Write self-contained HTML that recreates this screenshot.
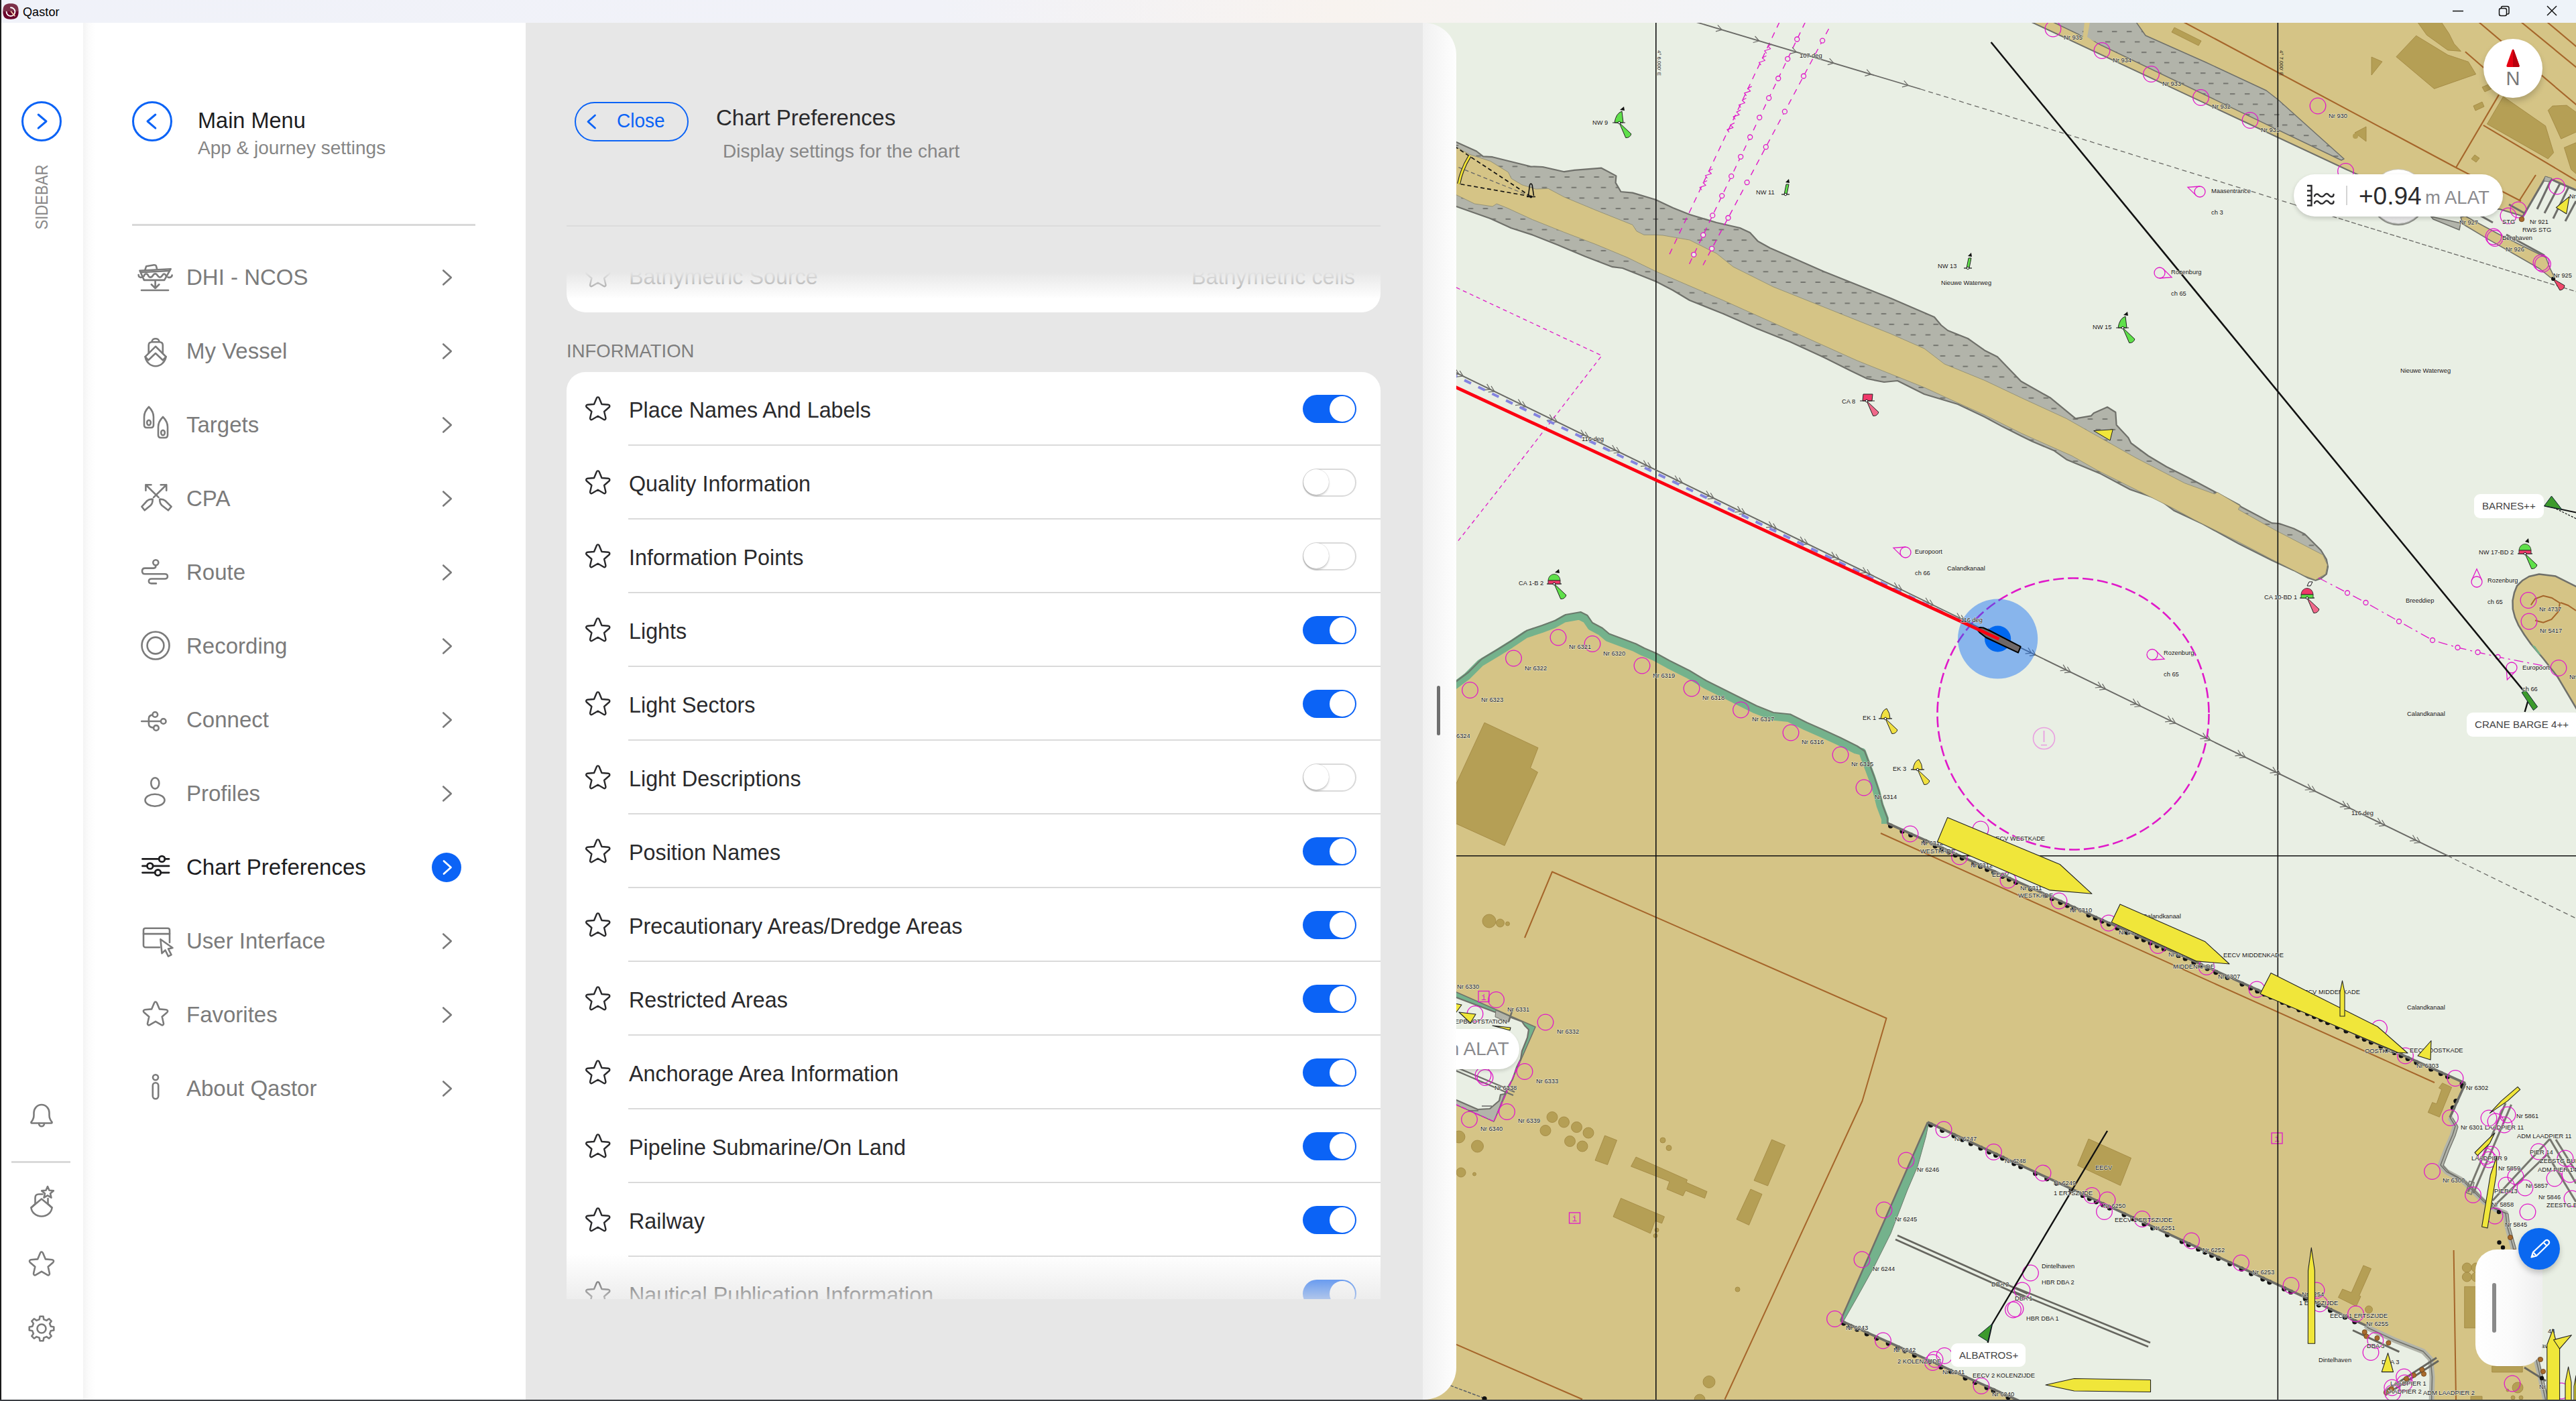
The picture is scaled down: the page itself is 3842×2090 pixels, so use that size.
<!DOCTYPE html>
<html><head><meta charset="utf-8"><title>Qastor</title>
<style>
*{box-sizing:border-box;margin:0;padding:0}
html,body{width:3842px;height:2090px;overflow:hidden;background:#fff;font-family:"Liberation Sans",sans-serif;}
.abs{position:absolute}
#titlebar{position:absolute;left:0;top:0;width:3842px;height:34px;background:linear-gradient(90deg,#f0f2f9 0,#f1f2f8 1400px,#f8f3ef 2000px,#f2f3f7 2600px,#eef3f9 3300px,#eef3f9 3842px);}
#titlebar .name{position:absolute;left:34px;top:7px;font-size:18px;line-height:22px;color:#000;letter-spacing:0.1px}
#lborder{position:absolute;left:0;top:0;width:2px;height:2090px;background:linear-gradient(90deg,#222,#111)}
#bborder{position:absolute;left:0;top:2088px;width:3842px;height:2px;background:linear-gradient(180deg,#33363a,#42454a)}
#sidebar{position:absolute;left:2px;top:34px;width:122px;height:2054px;background:#fff}
#menu{position:absolute;left:124px;top:34px;width:660px;height:2054px;background:linear-gradient(90deg,#f4f4f4 0,#fbfbfb 8px,#fff 18px,#fff 100%)}
#mid{position:absolute;left:784px;top:34px;width:1338px;height:2054px;background:#e7e7e7}
#midside{position:absolute;left:2122px;top:34px;width:50px;height:2054px;background:linear-gradient(90deg,#f1f1f1 0,#f6f6f6 40%,#fefefe 100%);border-radius:0 48px 48px 0}
.circ{position:absolute;width:60px;height:60px;border:3px solid #0b63f6;border-radius:50%}
.mi{position:absolute;left:0;width:660px;height:110px}
.mi .t{position:absolute;left:154px;top:36px;font-size:33px;line-height:38px;color:#7b7b7b;white-space:nowrap}
.mi.act .t{color:#1d1d1f}
.mi svg.ic{position:absolute;left:76px;top:23px;width:64px;height:64px;overflow:visible}
.mi svg.ch{position:absolute;left:528px;top:38px;width:30px;height:34px;overflow:visible}
.g{stroke:#7b7b7b;fill:none;stroke-width:2.6;stroke-linecap:round;stroke-linejoin:round}
.k{stroke:#1d1d1f;fill:none;stroke-width:2.8;stroke-linecap:round;stroke-linejoin:round}
.row{position:absolute;left:0;width:1214px;height:110px}
.row .t{position:absolute;left:93px;top:37.500px;font-size:32.300px;line-height:38px;color:#2a2a2c;white-space:nowrap}
.row .sep{position:absolute;left:92px;right:0;top:108px;height:2px;background:#dadada}
.row svg.st{position:absolute;left:27px;top:33px;width:40px;height:40px;overflow:visible}
.tg{position:absolute;left:1098px;top:34px;width:80px;height:42px;border-radius:21px}
.tg.on{background:#0b63f6}
.tg.on i{position:absolute;right:2px;top:2px;width:38px;height:38px;border-radius:50%;background:#fff}
.tg.off{background:#fff;border:2px solid #d9d9d9}
.tg.off i{position:absolute;left:-1px;top:-1px;width:38px;height:38px;border-radius:50%;background:#fff;box-shadow:0 2px 3px rgba(0,0,0,.22),0 0 1px rgba(0,0,0,.25)}
</style></head><body>
<div id="titlebar">
<svg class="abs" style="left:4px;top:5px" width="24" height="24" viewBox="0 0 24 24"><defs><linearGradient id="lg" x1="0" y1="0" x2="0" y2="1"><stop offset="0.5" stop-color="#7c3049"/><stop offset="0.5" stop-color="#69062c"/></linearGradient></defs><path d="M12 0.3C19.5 0.3 23.7 2.5 23.7 12S19.5 23.7 12 23.7 0.3 21.5 0.3 12 4.500 0.300 12 0.300Z" fill="url(#lg)"/><path d="M5.6 12.6a6.4 6.400 0 1 0 6.400-6.400" fill="none" stroke="#fff" stroke-width="1.900" stroke-linecap="round"/><path d="M12.500 12.200L18 18.600" stroke="#f3cfa6" stroke-width="1.700" stroke-linecap="round"/></svg>
<div class="name">Qastor</div>
<svg class="abs" style="left:3640px;top:0" width="202" height="34" viewBox="0 0 202 34"><g stroke="#111" stroke-width="1.500" fill="none"><path d="M18 16.500H34"/><rect x="87.500" y="12.500" width="11" height="11" rx="2.500"/><path d="M90.500 12.500V11.500a2 2 0 0 1 2-2h7a2.500 2.500 0 0 1 2.500 2.500v7a2 2 0 0 1-2 2h-1"/><path d="M159 9L173 23M173 9L159 23"/></g></svg>
</div>
<svg class="abs" style="left:2122px;top:34px" width="1720" height="2056" viewBox="2122 34 1720 2056" font-family="Liberation Sans, sans-serif">
<defs><pattern id="dash" width="22" height="31.400" patternUnits="userSpaceOnUse" x="2267.500" y="254.200"><rect x="0" y="9" width="7.500" height="1.700" fill="#6b6c66"/><rect x="10.200" y="24.700" width="7.500" height="1.700" fill="#6b6c66"/></pattern><pattern id="dash2" width="22" height="31" patternUnits="userSpaceOnUse" x="3127.900" y="37.200"><rect x="0" y="9" width="7.500" height="1.700" fill="#6b6c66"/><rect x="12" y="24.500" width="7.500" height="1.700" fill="#6b6c66"/></pattern>
<clipPath id="mapclip"><rect x="2122" y="34" width="1720" height="2053"/></clipPath></defs>
<rect x="2122" y="34" width="1720" height="2056" fill="#e9efe4"/>
<polygon points="2122.0,190.0 2172.0,212.0 2202.0,225.5 2212.0,233.4 2226.0,234.2 2282.5,248.3 2301.0,249.0 2333.0,256.2 2348.0,253.8 2388.5,250.7 2410.4,262.4 2409.6,272.6 2417.5,286.0 2435.0,287.6 2469.0,297.8 2495.0,310.0 2520.0,320.0 2560.0,332.0 2595.0,340.0 2610.0,347.0 2622.0,360.0 2640.0,370.0 2670.0,383.0 2720.0,405.0 2770.0,425.0 2820.0,445.0 2885.0,473.0 2895.0,485.0 2905.0,493.0 2935.0,505.0 2960.0,522.7 2979.0,532.2 3014.2,568.8 3057.6,593.2 3095.6,624.4 3118.7,620.4 3122.7,616.3 3143.0,607.3 3155.3,615.0 3156.6,634.0 3174.3,652.9 3178.3,661.0 3204.0,680.0 3231.2,696.3 3266.5,714.0 3304.4,734.3 3339.7,753.2 3342.4,756.0 3388.5,780.4 3399.4,781.0 3421.0,788.5 3437.4,796.7 3448.2,807.5 3461.7,821.0 3469.9,834.6 3472.0,845.5 3469.9,856.3 3461.7,863.0 3453.6,865.8 3442.8,862.3 3421.0,850.9 3388.5,836.0 3339.7,811.6 3285.5,781.7 3242.0,761.4 3220.4,745.1 3177.0,730.2 3133.6,707.1 3082.0,685.4 3063.0,671.9 3030.5,658.3 3014.2,650.2 2987.0,636.6 2960.0,622.0 2920.0,603.0 2870.0,588.0 2850.0,578.0 2830.0,568.0 2810.0,570.0 2785.0,565.0 2760.0,553.0 2720.0,533.0 2670.0,510.0 2620.0,490.0 2570.0,468.0 2520.0,448.0 2495.0,433.0 2470.0,420.0 2420.0,400.0 2405.0,398.2 2364.0,382.5 2323.0,365.3 2285.6,350.4 2254.0,340.2 2222.8,326.0 2172.0,308.0 2122.0,290.0" fill="#b2b4aa" stroke="#6f706a" stroke-width="2.2" stroke-linejoin="round" />
<polygon points="2122.0,190.0 2172.0,212.0 2202.0,225.5 2212.0,233.4 2226.0,234.2 2282.5,248.3 2301.0,249.0 2333.0,256.2 2348.0,253.8 2388.5,250.7 2410.4,262.4 2409.6,272.6 2417.5,286.0 2435.0,287.6 2469.0,297.8 2495.0,310.0 2520.0,320.0 2560.0,332.0 2595.0,340.0 2610.0,347.0 2622.0,360.0 2640.0,370.0 2670.0,383.0 2720.0,405.0 2770.0,425.0 2820.0,445.0 2885.0,473.0 2895.0,485.0 2905.0,493.0 2935.0,505.0 2960.0,522.7 2979.0,532.2 3014.2,568.8 3057.6,593.2 3095.6,624.4 3118.7,620.4 3122.7,616.3 3143.0,607.3 3155.3,615.0 3156.6,634.0 3174.3,652.9 3178.3,661.0 3204.0,680.0 3231.2,696.3 3266.5,714.0 3304.4,734.3 3339.7,753.2 3342.4,756.0 3388.5,780.4 3399.4,781.0 3421.0,788.5 3437.4,796.7 3448.2,807.5 3461.7,821.0 3469.9,834.6 3472.0,845.5 3469.9,856.3 3461.7,863.0 3453.6,865.8 3442.8,862.3 3421.0,850.9 3388.5,836.0 3339.7,811.6 3285.5,781.7 3242.0,761.4 3220.4,745.1 3177.0,730.2 3133.6,707.1 3082.0,685.4 3063.0,671.9 3030.5,658.3 3014.2,650.2 2987.0,636.6 2960.0,622.0 2920.0,603.0 2870.0,588.0 2850.0,578.0 2830.0,568.0 2810.0,570.0 2785.0,565.0 2760.0,553.0 2720.0,533.0 2670.0,510.0 2620.0,490.0 2570.0,468.0 2520.0,448.0 2495.0,433.0 2470.0,420.0 2420.0,400.0 2405.0,398.2 2364.0,382.5 2323.0,365.3 2285.6,350.4 2254.0,340.2 2222.8,326.0 2172.0,308.0 2122.0,290.0" fill="url(#dash)"/>
<polygon points="2122.0,196.0 2172.0,219.3 2191.4,230.2 2222.8,240.4 2249.5,256.9 2254.2,266.4 2270.0,275.8 2290.3,282.0 2309.2,281.3 2332.7,293.8 2380.0,313.5 2434.8,335.4 2441.0,344.9 2452.0,350.4 2469.3,350.4 2480.0,351.0 2520.0,358.0 2560.0,378.0 2585.0,398.0 2645.0,428.0 2720.0,458.0 2820.0,498.0 2870.0,520.0 2900.0,543.0 2960.0,567.5 3014.2,593.2 3082.0,624.4 3122.7,647.5 3185.0,682.7 3258.3,720.7 3303.0,737.0 3307.0,734.3 3341.0,754.6 3338.3,760.0 3394.0,791.2 3464.5,827.8 3471.2,842.8 3468.5,856.3 3453.6,865.0 3437.4,859.0 3388.5,834.6 3339.7,808.9 3272.0,775.0 3242.0,758.7 3177.0,726.1 3128.2,701.7 3090.2,680.0 3041.4,658.3 3014.2,646.1 2960.0,619.0 2920.0,601.0 2870.0,578.0 2770.0,538.0 2670.0,493.0 2570.0,448.0 2470.0,405.0 2426.9,384.0 2380.0,364.5 2332.7,346.4 2285.6,327.6 2248.0,310.3 2232.2,304.0 2226.0,308.0 2199.3,304.0 2172.0,290.7 2122.0,268.0" fill="#d5c486" stroke="#8c8a70" stroke-width="0.8" stroke-linejoin="round" />
<polyline points="2283.0,293.0 2172.0,220.0" fill="none" stroke="#111" stroke-width="1.6" stroke-linejoin="round" stroke-dasharray="6 4"/>
<polyline points="2283.0,293.0 2175.7,274.2" fill="none" stroke="#111" stroke-width="1.6" stroke-linejoin="round" stroke-dasharray="6 4"/>
<polyline points="2283.0,293.0 2172.0,248.3" fill="none" stroke="#666" stroke-width="1.2" stroke-linejoin="round" stroke-dasharray="6 4"/>
<path d="M2192.200 232.600Q2180 252 2175.700 274.200" fill="none" stroke="#222" stroke-width="5"/><path d="M2192.200 232.600Q2180 252 2175.700 274.200" fill="none" stroke="#f3e531" stroke-width="2.800"/>
<path d="M2279.500 292L2281.500 276Q2283.300 272 2285.200 276L2287.500 292M2277 293.500H2290" fill="none" stroke="#111" stroke-width="1.600"/><circle cx="2283.300" cy="293.500" r="2" fill="#111"/>
<polygon points="3122.7,642.6 3151.2,640.7 3147.1,657.0" fill="#f0e63a" stroke="#222" stroke-width="1" stroke-linejoin="round" />
<polygon points="3015.0,25.0 3030.0,33.0 3500.0,253.0 3560.0,280.0 3625.0,312.0 3728.0,312.0 3763.0,322.5 3761.0,326.0 3797.0,264.0 3842.0,283.0 3860.0,290.0 3860.0,25.0" fill="#d5c486" stroke="#6f706a" stroke-width="2" stroke-linejoin="round" />
<polygon points="3062.0,33.0 3186.0,33.0 3200.0,53.0 3290.0,93.0 3380.0,135.0 3398.0,149.0 3496.0,237.0 3492.0,239.0" fill="#b2b4aa" stroke="#6f706a" stroke-width="1.5" stroke-linejoin="round" />
<polygon points="3062.0,33.0 3186.0,33.0 3200.0,53.0 3290.0,93.0 3380.0,135.0 3398.0,149.0 3496.0,237.0 3492.0,239.0" fill="url(#dash2)"/>
<polygon points="3109.0,33.0 3117.0,33.0 3113.0,55.0 3135.0,70.0 3131.0,76.0 3106.0,58.0" fill="#d5c486" stroke="none" stroke-width="0" stroke-linejoin="round" />
<polygon points="3625.6,323.0 3670.0,332.8 3668.0,343.0 3629.0,327.0" fill="#b2b4aa" stroke="#6f706a" stroke-width="1.5" stroke-linejoin="round" />
<polygon points="3670.0,324.0 3677.0,322.5 3728.0,350.0 3797.0,384.0 3803.8,401.3 3810.6,415.0 3803.8,414.0 3788.0,401.0 3711.0,356.8 3673.6,334.5" fill="#d5c486" stroke="#6f706a" stroke-width="1.5" stroke-linejoin="round" />
<line x1="3761.0" y1="326.0" x2="3797.0" y2="264.0" stroke="#6e6e6a" stroke-width="3" />
<line x1="3797.0" y1="264.0" x2="3842.0" y2="284.0" stroke="#6e6e6a" stroke-width="3" />
<line x1="3805.0" y1="268.0" x2="3784.0" y2="312.0" stroke="#6e6e6a" stroke-width="3" />
<line x1="3818.0" y1="274.0" x2="3795.0" y2="318.0" stroke="#6e6e6a" stroke-width="3" />
<line x1="3831.0" y1="279.0" x2="3808.0" y2="326.0" stroke="#6e6e6a" stroke-width="3" />
<line x1="3842.0" y1="300.0" x2="3826.0" y2="330.0" stroke="#6e6e6a" stroke-width="3" />
<line x1="3765.0" y1="318.0" x2="3742.0" y2="305.0" stroke="#6e6e6a" stroke-width="3" />
<line x1="3700.0" y1="322.0" x2="3718.0" y2="332.0" stroke="#6e6e6a" stroke-width="3" />
<line x1="3738.0" y1="350.0" x2="3795.0" y2="381.0" stroke="#6e6e6a" stroke-width="3" />
<polygon points="3796.0,263.0 3806.0,266.0 3802.0,271.0 3794.0,270.0" fill="#b2b4aa" stroke="#6f706a" stroke-width="1" stroke-linejoin="round" />
<polygon points="3603.6,53.2 3650.9,82.0 3681.5,92.2 3692.7,110.7 3630.5,132.4 3573.9,84.7" fill="#b59f55" stroke="#a08540" stroke-width="0.8" stroke-linejoin="round" />
<polygon points="3600.0,25.0 3636.0,25.0 3652.8,50.4 3660.2,65.3 3670.4,76.4 3650.9,74.9 3619.4,52.3" fill="#b59f55" stroke="#a08540" stroke-width="0.8" stroke-linejoin="round" />
<polygon points="3733.5,144.1 3796.5,187.8 3808.6,227.7 3800.3,236.9 3709.4,185.0" fill="#b59f55" stroke="#a08540" stroke-width="0.8" stroke-linejoin="round" />
<polygon points="3800.3,164.6 3806.8,158.1 3828.1,157.1 3850.0,173.0 3850.0,193.5 3819.7,207.2" fill="#b59f55" stroke="#a08540" stroke-width="0.8" stroke-linejoin="round" />
<polygon points="3824.4,220.2 3850.0,209.5 3850.0,266.0 3834.6,252.7" fill="#b59f55" stroke="#a08540" stroke-width="0.8" stroke-linejoin="round" />
<polygon points="3239.0,48.0 3243.0,41.0 3283.0,61.0 3279.0,68.0" fill="#b59f55" stroke="#a08540" stroke-width="0.8" stroke-linejoin="round" />
<polygon points="3537.0,85.0 3553.0,92.0 3537.0,112.0" fill="#b59f55" stroke="#a08540" stroke-width="0.8" stroke-linejoin="round" />
<polygon points="3702.0,130.0 3716.0,124.0 3719.0,131.0 3706.0,137.0" fill="#b59f55" stroke="#a08540" stroke-width="0.8" stroke-linejoin="round" />
<polygon points="3689.0,158.0 3702.0,152.0 3705.0,159.0 3692.0,165.0" fill="#b59f55" stroke="#a08540" stroke-width="0.8" stroke-linejoin="round" />
<polygon points="3686.0,237.0 3691.0,231.0 3698.0,236.0 3693.0,242.0" fill="#b59f55" stroke="#a08540" stroke-width="0.8" stroke-linejoin="round" />
<polygon points="3512.0,198.0 3529.0,189.0 3529.0,211.0" fill="#b59f55" stroke="#a08540" stroke-width="0.8" stroke-linejoin="round" />
<circle cx="3513.0" cy="203.0" r="4" fill="#b59f55" stroke="none" stroke-width="0" />
<line x1="3257.0" y1="33.0" x2="3663.0" y2="250.0" stroke="#a5652a" stroke-width="2.1" />
<line x1="3663.0" y1="250.0" x2="3760.0" y2="300.0" stroke="#a5652a" stroke-width="2.1" />
<line x1="3663.0" y1="250.0" x2="3727.0" y2="141.4" stroke="#a5652a" stroke-width="2.1" />
<line x1="3703.8" y1="186.8" x2="3850.0" y2="274.0" stroke="#a5652a" stroke-width="2.1" />
<line x1="3676.9" y1="77.3" x2="3706.0" y2="102.5" stroke="#a5652a" stroke-width="2.1" />
<line x1="3693.6" y1="30.0" x2="3850.0" y2="162.7" stroke="#a5652a" stroke-width="2.1" />
<line x1="3756.7" y1="30.0" x2="3850.0" y2="106.7" stroke="#a5652a" stroke-width="2.1" />
<line x1="3795.6" y1="30.0" x2="3850.0" y2="76.0" stroke="#a5652a" stroke-width="2.1" />
<line x1="3757.0" y1="300.0" x2="3782.0" y2="261.0" stroke="#a5652a" stroke-width="2.1" />
<polygon points="3860.0,884.0 3811.6,859.6 3787.0,856.5 3772.0,860.0 3762.5,865.7 3754.0,874.0 3750.0,884.0 3747.5,896.0 3747.8,908.7 3751.0,921.0 3756.4,933.2 3765.0,947.0 3774.8,960.8 3793.0,982.3 3814.7,1010.0 3842.0,1056.0 3860.0,1086.0" fill="#d5c486" stroke="#6f706a" stroke-width="2.5" stroke-linejoin="round" />
<path d="M3774.800 902.500L3781 893.300L3793.200 888.700L3806 892L3817.800 899.500L3816.200 911.700L3805.500 924L3793.200 928.600L3781 925.500" fill="none" stroke="#a5652a" stroke-width="2"/><path d="M3819 899L3830 903L3842 911" fill="none" stroke="#a5652a" stroke-width="2"/>
<polygon points="3776.0,962.0 3781.0,964.0 3790.0,977.0 3786.0,976.0" fill="#74b28c" stroke="none" stroke-width="0" stroke-linejoin="round" />
<polygon points="2122.0,1060.0 2170.0,1018.0 2190.0,1003.0 2210.0,983.0 2235.0,968.0 2255.0,955.5 2277.5,940.5 2300.0,933.0 2320.0,925.5 2335.0,917.0 2357.5,913.0 2367.5,918.0 2375.0,929.0 2390.0,937.0 2400.0,945.5 2420.0,953.0 2440.0,960.5 2452.5,967.0 2470.0,974.5 2490.0,985.5 2520.0,1000.5 2545.0,1015.5 2570.0,1028.0 2595.0,1040.5 2620.0,1053.0 2645.0,1063.0 2670.0,1065.5 2695.0,1078.0 2720.0,1089.0 2745.0,1100.5 2770.0,1113.0 2781.0,1120.5 2787.5,1138.0 2795.0,1158.0 2802.5,1180.5 2807.5,1200.5 2815.0,1220.5 2815.0,1228.0 3677.0,1616.0 3668.0,1633.0 3658.0,1656.0 3654.0,1667.0 3662.0,1680.0 3658.0,1693.0 3649.0,1714.0 3640.0,1738.0 3649.0,1748.0 3673.0,1761.0 3686.0,1774.0 3705.0,1793.0 3722.0,1804.0 3737.0,1810.0 3739.0,1828.0 3748.0,1860.0 3784.0,2034.0 3792.0,2068.0 3797.0,2090.0 2122.0,2090.0" fill="#d5c486" stroke="none" stroke-width="0" stroke-linejoin="round" />
<polyline points="2120.0,1066.0 2168.0,1024.0 2188.0,1009.0 2208.0,989.0 2233.0,974.0 2253.0,961.5 2275.5,946.5 2298.0,939.0 2318.0,931.5 2333.0,923.0 2355.5,919.0 2365.5,924.0 2373.0,935.0 2388.0,943.0 2398.0,951.5 2418.0,959.0 2438.0,966.5 2450.5,973.0 2468.0,980.5 2488.0,991.5 2518.0,1006.5 2543.0,1021.5 2568.0,1034.0 2593.0,1046.5 2618.0,1059.0 2643.0,1069.0 2668.0,1071.5 2693.0,1084.0 2718.0,1095.0 2743.0,1106.5 2768.0,1119.0 2777.5,1121.5 2784.0,1139.0 2791.5,1159.0 2799.0,1181.5 2804.0,1201.5 2811.5,1221.5 2811.5,1229.0" fill="none" stroke="#74b28c" stroke-width="11" stroke-linejoin="round" stroke-linecap="butt"/>
<polyline points="2122.0,1060.0 2170.0,1018.0 2190.0,1003.0 2210.0,983.0 2235.0,968.0 2255.0,955.5 2277.5,940.5 2300.0,933.0 2320.0,925.5 2335.0,917.0 2357.5,913.0 2367.5,918.0 2375.0,929.0 2390.0,937.0 2400.0,945.5 2420.0,953.0 2440.0,960.5 2452.5,967.0 2470.0,974.5 2490.0,985.5 2520.0,1000.5 2545.0,1015.5 2570.0,1028.0 2595.0,1040.5 2620.0,1053.0 2645.0,1063.0 2670.0,1065.5 2695.0,1078.0 2720.0,1089.0 2745.0,1100.5 2770.0,1113.0 2781.0,1120.5 2787.5,1138.0 2795.0,1158.0 2802.5,1180.5 2807.5,1200.5 2815.0,1220.5 2815.0,1228.0" fill="none" stroke="#6b7a6c" stroke-width="2.2" stroke-linejoin="round" />
<polygon points="2875.0,1674.0 3528.5,1977.4 3532.0,1981.0 3571.0,1999.0 3614.0,2016.0 3625.0,2027.4 3627.5,2054.0 3626.6,2090.0 3012.0,2090.0 2745.0,1970.0" fill="#e9efe4" stroke="none" stroke-width="0" stroke-linejoin="round" />
<polygon points="2875.0,1674.0 2745.0,1970.0 2750.0,1970.0 2770.0,1935.0 2795.0,1890.0 2820.0,1840.0 2845.0,1775.0 2860.0,1740.0 2872.5,1695.0 2876.0,1678.0" fill="#74b28c" stroke="#6b7a6c" stroke-width="1" stroke-linejoin="round" />
<polyline points="2875.0,1674.0 2745.0,1970.0" fill="none" stroke="#6f706a" stroke-width="2.5" stroke-linejoin="round" />
<polyline points="3528.5,1977.4 3532.0,1981.0 3571.0,1999.0 3614.0,2016.0 3625.0,2027.4 3627.5,2054.0 3626.6,2090.0" fill="none" stroke="#b2b4aa" stroke-width="8" stroke-linejoin="round" />
<polyline points="3528.5,1977.4 3532.0,1981.0 3571.0,1999.0 3614.0,2016.0 3625.0,2027.4 3627.5,2054.0 3626.6,2090.0" fill="none" stroke="#6f706a" stroke-width="1.5" stroke-linejoin="round" />
<polygon points="2122.0,1458.0 2172.0,1480.0 2290.0,1532.0 2228.0,1673.0 2172.0,1648.0 2122.0,1626.0" fill="#74b28c" stroke="#6f706a" stroke-width="1.5" stroke-linejoin="round" />
<polygon points="2244.0,1632.0 2228.0,1673.0 2172.0,1648.0 2122.0,1626.0 2122.0,1618.0 2172.0,1641.0 2204.0,1655.0 2222.0,1654.0 2236.0,1642.0 2238.0,1633.0" fill="#b2b4aa" stroke="#6f706a" stroke-width="1" stroke-linejoin="round" />
<polygon points="2122.0,1466.0 2172.0,1488.0 2230.0,1510.0 2254.0,1518.0 2270.0,1524.0 2274.0,1530.0 2280.0,1536.0 2278.0,1548.0 2270.0,1568.0 2268.0,1580.0 2262.0,1592.0 2256.0,1610.0 2250.0,1620.0 2244.0,1632.0 2238.0,1633.0 2236.0,1642.0 2222.0,1654.0 2204.0,1655.0 2172.0,1641.0 2122.0,1618.0" fill="#e9efe4" stroke="#6f706a" stroke-width="2.2" stroke-linejoin="round" />
<polygon points="2231.0,1507.0 2253.0,1517.0 2250.0,1525.0 2230.0,1517.0" fill="#b2b4aa" stroke="#6f706a" stroke-width="1" stroke-linejoin="round" />
<line x1="2256.0" y1="1506.0" x2="2250.0" y2="1524.0" stroke="#6f706a" stroke-width="2.5" />
<line x1="2122.0" y1="1571.0" x2="2259.0" y2="1629.0" stroke="#6f706a" stroke-width="2.2" />
<line x1="2122.0" y1="1576.0" x2="2257.0" y2="1634.0" stroke="#6f706a" stroke-width="2.2" />
<polyline points="2267.0,1583.0 2228.0,1673.0 2172.0,1648.0 2122.0,1626.0" fill="none" stroke="#e019c9" stroke-width="1.6" stroke-linejoin="round" stroke-dasharray="8 3"/>
<polyline points="2210.0,1650.0 2225.0,1650.0" fill="none" stroke="#666" stroke-width="1.5" stroke-linejoin="round" />
<polyline points="2190.0,1657.0 2205.0,1657.0" fill="none" stroke="#666" stroke-width="1.5" stroke-linejoin="round" />
<polyline points="3654.0,1667.0 3662.0,1680.0 3658.0,1693.0 3649.0,1714.0 3640.0,1738.0 3649.0,1748.0 3673.0,1761.0 3686.0,1774.0 3705.0,1793.0 3722.0,1804.0 3737.0,1810.0 3739.0,1828.0 3748.0,1860.0 3784.0,2034.0 3792.0,2068.0 3797.0,2090.0" fill="none" stroke="#b2b4aa" stroke-width="8" stroke-linejoin="round" />
<polyline points="3654.0,1667.0 3662.0,1680.0 3658.0,1693.0 3649.0,1714.0 3640.0,1738.0 3649.0,1748.0 3673.0,1761.0 3686.0,1774.0 3705.0,1793.0 3722.0,1804.0 3737.0,1810.0 3739.0,1828.0 3748.0,1860.0 3784.0,2034.0 3792.0,2068.0 3797.0,2090.0" fill="none" stroke="#6f706a" stroke-width="1.5" stroke-linejoin="round" />
<polyline points="3658.0,1668.0 3666.0,1681.0 3662.0,1694.0 3653.0,1715.0 3644.0,1739.0 3653.0,1749.0 3677.0,1762.0 3690.0,1775.0 3709.0,1794.0 3726.0,1805.0 3741.0,1811.0 3743.0,1829.0 3752.0,1861.0 3788.0,2035.0 3796.0,2069.0 3801.0,2091.0" fill="none" stroke="#6f706a" stroke-width="1.2" stroke-linejoin="round" />
<polygon points="2214.0,1078.0 2294.0,1115.5 2282.5,1145.5 2293.5,1152.0 2244.0,1261.5 2149.0,1218.5" fill="#b59f55" stroke="#a08540" stroke-width="0.8" stroke-linejoin="round" />
<polygon points="2393.5,1694.0 2411.5,1701.0 2397.5,1737.5 2379.0,1731.0" fill="#b59f55" stroke="#a08540" stroke-width="0.8" stroke-linejoin="round" />
<polygon points="2440.0,1726.0 2516.5,1760.0 2515.0,1764.0 2546.0,1777.5 2542.5,1787.5 2514.0,1776.0 2510.0,1784.0 2486.0,1774.0 2490.0,1762.5 2432.5,1740.0" fill="#b59f55" stroke="#a08540" stroke-width="0.8" stroke-linejoin="round" />
<polygon points="2417.5,1787.5 2482.5,1815.0 2478.5,1825.0 2468.5,1821.0 2461.5,1840.0 2406.0,1815.0" fill="#b59f55" stroke="#a08540" stroke-width="0.8" stroke-linejoin="round" />
<polygon points="2642.5,1700.0 2662.5,1708.5 2636.5,1769.0 2616.0,1761.0" fill="#b59f55" stroke="#a08540" stroke-width="0.8" stroke-linejoin="round" />
<polygon points="2611.0,1774.0 2628.0,1781.5 2608.5,1827.5 2590.0,1819.0" fill="#b59f55" stroke="#a08540" stroke-width="0.8" stroke-linejoin="round" />
<polygon points="3115.0,1699.0 3178.5,1727.5 3162.5,1768.5 3098.5,1738.5" fill="#b59f55" stroke="#a08540" stroke-width="0.8" stroke-linejoin="round" />
<polygon points="3642.7,1615.7 3656.6,1622.0 3638.4,1666.4 3621.3,1659.5 3627.7,1644.6 3634.0,1646.7 3641.6,1625.3 3637.4,1623.0" fill="#b59f55" stroke="#a08540" stroke-width="0.8" stroke-linejoin="round" />
<polygon points="3524.9,1887.8 3536.5,1892.6 3518.7,1932.8 3521.0,1934.0 3514.2,1948.8 3487.4,1935.5 3493.7,1923.0 3507.0,1928.3" fill="#b59f55" stroke="#a08540" stroke-width="0.8" stroke-linejoin="round" />
<polygon points="3675.7,1919.4 3700.0,1919.4 3700.0,1981.0 3675.7,1981.0" fill="#b59f55" stroke="#a08540" stroke-width="0.8" stroke-linejoin="round" />
<polygon points="3716.7,2038.0 3762.2,2038.0 3762.2,2047.0 3716.7,2047.0" fill="#b59f55" stroke="#a08540" stroke-width="0.8" stroke-linejoin="round" />
<polygon points="3685.0,2083.0 3702.0,2083.0 3702.0,2090.0 3685.0,2090.0" fill="#b59f55" stroke="#a08540" stroke-width="0.8" stroke-linejoin="round" />
<circle cx="2221.0" cy="1374.0" r="10" fill="#b59f55" stroke="#a08540" stroke-width="0.8" />
<circle cx="2237.5" cy="1377.0" r="6" fill="#b59f55" stroke="#a08540" stroke-width="0.8" />
<circle cx="2248.5" cy="1378.0" r="3" fill="#b59f55" stroke="#a08540" stroke-width="0.8" />
<circle cx="2315.0" cy="1666.5" r="8" fill="#b59f55" stroke="#a08540" stroke-width="0.8" />
<circle cx="2332.5" cy="1674.0" r="8" fill="#b59f55" stroke="#a08540" stroke-width="0.8" />
<circle cx="2351.5" cy="1681.5" r="8" fill="#b59f55" stroke="#a08540" stroke-width="0.8" />
<circle cx="2369.0" cy="1690.0" r="8" fill="#b59f55" stroke="#a08540" stroke-width="0.8" />
<circle cx="2305.0" cy="1686.5" r="8" fill="#b59f55" stroke="#a08540" stroke-width="0.8" />
<circle cx="2341.5" cy="1702.5" r="8" fill="#b59f55" stroke="#a08540" stroke-width="0.8" />
<circle cx="2360.0" cy="1710.0" r="8" fill="#b59f55" stroke="#a08540" stroke-width="0.8" />
<circle cx="2176.0" cy="1696.0" r="9" fill="#b59f55" stroke="#a08540" stroke-width="0.8" />
<circle cx="2203.5" cy="1710.0" r="9" fill="#b59f55" stroke="#a08540" stroke-width="0.8" />
<circle cx="2179.0" cy="1749.0" r="7" fill="#b59f55" stroke="#a08540" stroke-width="0.8" />
<circle cx="2199.0" cy="1751.5" r="2.5" fill="#b59f55" stroke="#a08540" stroke-width="0.8" />
<circle cx="2480.0" cy="1701.0" r="4" fill="#b59f55" stroke="#a08540" stroke-width="0.8" />
<circle cx="2489.0" cy="1712.5" r="4" fill="#b59f55" stroke="#a08540" stroke-width="0.8" />
<circle cx="2471.0" cy="1835.0" r="3" fill="#b59f55" stroke="#a08540" stroke-width="0.8" />
<circle cx="2469.0" cy="1843.5" r="3" fill="#b59f55" stroke="#a08540" stroke-width="0.8" />
<circle cx="2591.5" cy="1923.5" r="3.5" fill="#b59f55" stroke="#a08540" stroke-width="0.8" />
<circle cx="2549.0" cy="2061.5" r="9" fill="#b59f55" stroke="#a08540" stroke-width="0.8" />
<circle cx="2535.0" cy="2088.0" r="8" fill="#b59f55" stroke="#a08540" stroke-width="0.8" />
<circle cx="3679.3" cy="1891.0" r="7" fill="#b59f55" stroke="#a08540" stroke-width="0.8" />
<circle cx="3679.3" cy="1905.0" r="7" fill="#b59f55" stroke="#a08540" stroke-width="0.8" />
<circle cx="3693.0" cy="1891.0" r="7" fill="#b59f55" stroke="#a08540" stroke-width="0.8" />
<circle cx="3693.0" cy="1905.0" r="7" fill="#b59f55" stroke="#a08540" stroke-width="0.8" />
<circle cx="3755.0" cy="2070.0" r="8" fill="#b59f55" stroke="#a08540" stroke-width="0.8" />
<circle cx="3533.0" cy="1953.5" r="5.5" fill="#b59f55" stroke="#a08540" stroke-width="0.8" />
<circle cx="3740.0" cy="2074.0" r="2" fill="#b59f55" stroke="#a08540" stroke-width="0.8" />
<circle cx="3748.0" cy="2085.0" r="3" fill="#b59f55" stroke="#a08540" stroke-width="0.8" />
<circle cx="3760.0" cy="2085.0" r="3" fill="#b59f55" stroke="#a08540" stroke-width="0.8" />
<polyline points="2274.0,1399.0 2315.0,1300.5 2813.5,1519.0 2777.5,1642.5 2572.5,2087.5" fill="none" stroke="#a5652a" stroke-width="2" stroke-linejoin="round" />
<line x1="2122.0" y1="1984.0" x2="2360.0" y2="2087.5" stroke="#a5652a" stroke-width="2" />
<line x1="2150.0" y1="2062.0" x2="2214.0" y2="2086.0" stroke="#5a5f66" stroke-width="1.5" stroke-dasharray="5 2"/>
<circle cx="2214.0" cy="2086.5" r="3.6" fill="#111" stroke="none" stroke-width="0" />
<line x1="2805.0" y1="1243.0" x2="3631.0" y2="1615.0" stroke="#a5652a" stroke-width="2" />
<line x1="3659.6" y1="1865.0" x2="3663.0" y2="2090.0" stroke="#a5652a" stroke-width="2" />
<circle cx="2819.7" cy="1232.1" r="3.7" fill="#111" stroke="none" stroke-width="0" />
<circle cx="2837.1" cy="1239.9" r="3.7" fill="#111" stroke="none" stroke-width="0" />
<circle cx="2849.8" cy="1245.6" r="3.7" fill="#111" stroke="none" stroke-width="0" />
<circle cx="2871.7" cy="1255.5" r="3.7" fill="#111" stroke="none" stroke-width="0" />
<circle cx="2886.3" cy="1262.1" r="3.7" fill="#111" stroke="none" stroke-width="0" />
<circle cx="2896.3" cy="1266.6" r="3.7" fill="#111" stroke="none" stroke-width="0" />
<circle cx="2906.4" cy="1271.1" r="3.7" fill="#111" stroke="none" stroke-width="0" />
<circle cx="2916.4" cy="1275.6" r="3.7" fill="#111" stroke="none" stroke-width="0" />
<circle cx="2926.4" cy="1280.1" r="3.7" fill="#111" stroke="none" stroke-width="0" />
<circle cx="2943.7" cy="1287.9" r="3.7" fill="#111" stroke="none" stroke-width="0" />
<circle cx="2953.8" cy="1292.4" r="3.7" fill="#111" stroke="none" stroke-width="0" />
<circle cx="2963.8" cy="1297.0" r="3.7" fill="#111" stroke="none" stroke-width="0" />
<circle cx="2973.8" cy="1301.5" r="3.7" fill="#111" stroke="none" stroke-width="0" />
<circle cx="2986.6" cy="1307.2" r="3.7" fill="#111" stroke="none" stroke-width="0" />
<circle cx="2996.6" cy="1311.7" r="3.7" fill="#111" stroke="none" stroke-width="0" />
<circle cx="3006.7" cy="1316.2" r="3.7" fill="#111" stroke="none" stroke-width="0" />
<circle cx="3028.6" cy="1326.1" r="3.7" fill="#111" stroke="none" stroke-width="0" />
<circle cx="3050.4" cy="1335.9" r="3.7" fill="#111" stroke="none" stroke-width="0" />
<circle cx="3060.5" cy="1340.5" r="3.7" fill="#111" stroke="none" stroke-width="0" />
<circle cx="3073.2" cy="1346.2" r="3.7" fill="#111" stroke="none" stroke-width="0" />
<circle cx="3083.3" cy="1350.7" r="3.7" fill="#111" stroke="none" stroke-width="0" />
<circle cx="3093.3" cy="1355.2" r="3.7" fill="#111" stroke="none" stroke-width="0" />
<circle cx="3115.2" cy="1365.1" r="3.7" fill="#111" stroke="none" stroke-width="0" />
<circle cx="3125.2" cy="1369.6" r="3.7" fill="#111" stroke="none" stroke-width="0" />
<circle cx="3135.2" cy="1374.1" r="3.7" fill="#111" stroke="none" stroke-width="0" />
<circle cx="3145.3" cy="1378.6" r="3.7" fill="#111" stroke="none" stroke-width="0" />
<circle cx="3158.0" cy="1384.4" r="3.7" fill="#111" stroke="none" stroke-width="0" />
<circle cx="3172.6" cy="1390.9" r="3.7" fill="#111" stroke="none" stroke-width="0" />
<circle cx="3187.2" cy="1397.5" r="3.7" fill="#111" stroke="none" stroke-width="0" />
<circle cx="3197.3" cy="1402.0" r="3.7" fill="#111" stroke="none" stroke-width="0" />
<circle cx="3207.3" cy="1406.5" r="3.7" fill="#111" stroke="none" stroke-width="0" />
<circle cx="3217.3" cy="1411.1" r="3.7" fill="#111" stroke="none" stroke-width="0" />
<circle cx="3227.3" cy="1415.6" r="3.7" fill="#111" stroke="none" stroke-width="0" />
<circle cx="3249.2" cy="1425.4" r="3.7" fill="#111" stroke="none" stroke-width="0" />
<circle cx="3259.3" cy="1429.9" r="3.7" fill="#111" stroke="none" stroke-width="0" />
<circle cx="3272.0" cy="1435.7" r="3.7" fill="#111" stroke="none" stroke-width="0" />
<circle cx="3282.1" cy="1440.2" r="3.7" fill="#111" stroke="none" stroke-width="0" />
<circle cx="3292.1" cy="1444.7" r="3.7" fill="#111" stroke="none" stroke-width="0" />
<circle cx="3304.9" cy="1450.5" r="3.7" fill="#111" stroke="none" stroke-width="0" />
<circle cx="3322.2" cy="1458.3" r="3.7" fill="#111" stroke="none" stroke-width="0" />
<circle cx="3344.1" cy="1468.1" r="3.7" fill="#111" stroke="none" stroke-width="0" />
<circle cx="3356.8" cy="1473.9" r="3.7" fill="#111" stroke="none" stroke-width="0" />
<circle cx="3366.9" cy="1478.4" r="3.7" fill="#111" stroke="none" stroke-width="0" />
<circle cx="3376.9" cy="1482.9" r="3.7" fill="#111" stroke="none" stroke-width="0" />
<circle cx="3386.9" cy="1487.4" r="3.7" fill="#111" stroke="none" stroke-width="0" />
<circle cx="3404.2" cy="1495.2" r="3.7" fill="#111" stroke="none" stroke-width="0" />
<circle cx="3414.3" cy="1499.7" r="3.7" fill="#111" stroke="none" stroke-width="0" />
<circle cx="3428.9" cy="1506.3" r="3.7" fill="#111" stroke="none" stroke-width="0" />
<circle cx="3441.6" cy="1512.0" r="3.7" fill="#111" stroke="none" stroke-width="0" />
<circle cx="3451.7" cy="1516.5" r="3.7" fill="#111" stroke="none" stroke-width="0" />
<circle cx="3461.7" cy="1521.1" r="3.7" fill="#111" stroke="none" stroke-width="0" />
<circle cx="3471.7" cy="1525.6" r="3.7" fill="#111" stroke="none" stroke-width="0" />
<circle cx="3486.3" cy="1532.1" r="3.7" fill="#111" stroke="none" stroke-width="0" />
<circle cx="3499.1" cy="1537.9" r="3.7" fill="#111" stroke="none" stroke-width="0" />
<circle cx="3516.4" cy="1545.7" r="3.7" fill="#111" stroke="none" stroke-width="0" />
<circle cx="3526.4" cy="1550.2" r="3.7" fill="#111" stroke="none" stroke-width="0" />
<circle cx="3536.5" cy="1554.7" r="3.7" fill="#111" stroke="none" stroke-width="0" />
<circle cx="3551.1" cy="1561.3" r="3.7" fill="#111" stroke="none" stroke-width="0" />
<circle cx="3561.1" cy="1565.8" r="3.7" fill="#111" stroke="none" stroke-width="0" />
<circle cx="3571.1" cy="1570.3" r="3.7" fill="#111" stroke="none" stroke-width="0" />
<circle cx="3581.2" cy="1574.8" r="3.7" fill="#111" stroke="none" stroke-width="0" />
<circle cx="3591.2" cy="1579.3" r="3.7" fill="#111" stroke="none" stroke-width="0" />
<circle cx="3604.0" cy="1585.1" r="3.7" fill="#111" stroke="none" stroke-width="0" />
<circle cx="3625.8" cy="1594.9" r="3.7" fill="#111" stroke="none" stroke-width="0" />
<circle cx="3640.4" cy="1601.5" r="3.7" fill="#111" stroke="none" stroke-width="0" />
<circle cx="3650.5" cy="1606.0" r="3.7" fill="#111" stroke="none" stroke-width="0" />
<circle cx="3672.3" cy="1615.9" r="3.7" fill="#111" stroke="none" stroke-width="0" />
<line x1="2815.0" y1="1228.0" x2="3677.0" y2="1616.0" stroke="#6e6e68" stroke-width="3.6" />
<circle cx="3672.9" cy="1620.7" r="3.7" fill="#111" stroke="none" stroke-width="0" />
<circle cx="3663.0" cy="1642.6" r="3.7" fill="#111" stroke="none" stroke-width="0" />
<circle cx="3658.5" cy="1652.6" r="3.7" fill="#111" stroke="none" stroke-width="0" />
<line x1="3677.0" y1="1616.0" x2="3654.0" y2="1667.0" stroke="#6e6e68" stroke-width="3.6" />
<circle cx="2879.7" cy="1678.2" r="3.7" fill="#111" stroke="none" stroke-width="0" />
<circle cx="2896.9" cy="1686.2" r="3.7" fill="#111" stroke="none" stroke-width="0" />
<circle cx="2914.2" cy="1694.2" r="3.7" fill="#111" stroke="none" stroke-width="0" />
<circle cx="2926.8" cy="1700.1" r="3.7" fill="#111" stroke="none" stroke-width="0" />
<circle cx="2939.5" cy="1706.0" r="3.7" fill="#111" stroke="none" stroke-width="0" />
<circle cx="2954.1" cy="1712.7" r="3.7" fill="#111" stroke="none" stroke-width="0" />
<circle cx="2966.8" cy="1718.6" r="3.7" fill="#111" stroke="none" stroke-width="0" />
<circle cx="2976.7" cy="1723.2" r="3.7" fill="#111" stroke="none" stroke-width="0" />
<circle cx="2986.7" cy="1727.8" r="3.7" fill="#111" stroke="none" stroke-width="0" />
<circle cx="3003.9" cy="1735.8" r="3.7" fill="#111" stroke="none" stroke-width="0" />
<circle cx="3013.9" cy="1740.5" r="3.7" fill="#111" stroke="none" stroke-width="0" />
<circle cx="3035.7" cy="1750.6" r="3.7" fill="#111" stroke="none" stroke-width="0" />
<circle cx="3052.9" cy="1758.6" r="3.7" fill="#111" stroke="none" stroke-width="0" />
<circle cx="3067.4" cy="1765.3" r="3.7" fill="#111" stroke="none" stroke-width="0" />
<circle cx="3089.2" cy="1775.4" r="3.7" fill="#111" stroke="none" stroke-width="0" />
<circle cx="3106.4" cy="1783.4" r="3.7" fill="#111" stroke="none" stroke-width="0" />
<circle cx="3116.4" cy="1788.1" r="3.7" fill="#111" stroke="none" stroke-width="0" />
<circle cx="3126.4" cy="1792.7" r="3.7" fill="#111" stroke="none" stroke-width="0" />
<circle cx="3136.4" cy="1797.3" r="3.7" fill="#111" stroke="none" stroke-width="0" />
<circle cx="3146.3" cy="1802.0" r="3.7" fill="#111" stroke="none" stroke-width="0" />
<circle cx="3168.1" cy="1812.1" r="3.7" fill="#111" stroke="none" stroke-width="0" />
<circle cx="3180.8" cy="1818.0" r="3.7" fill="#111" stroke="none" stroke-width="0" />
<circle cx="3198.0" cy="1826.0" r="3.7" fill="#111" stroke="none" stroke-width="0" />
<circle cx="3210.7" cy="1831.9" r="3.7" fill="#111" stroke="none" stroke-width="0" />
<circle cx="3232.5" cy="1842.0" r="3.7" fill="#111" stroke="none" stroke-width="0" />
<circle cx="3254.3" cy="1852.1" r="3.7" fill="#111" stroke="none" stroke-width="0" />
<circle cx="3264.3" cy="1856.7" r="3.7" fill="#111" stroke="none" stroke-width="0" />
<circle cx="3278.8" cy="1863.4" r="3.7" fill="#111" stroke="none" stroke-width="0" />
<circle cx="3288.7" cy="1868.1" r="3.7" fill="#111" stroke="none" stroke-width="0" />
<circle cx="3298.7" cy="1872.7" r="3.7" fill="#111" stroke="none" stroke-width="0" />
<circle cx="3308.7" cy="1877.3" r="3.7" fill="#111" stroke="none" stroke-width="0" />
<circle cx="3325.9" cy="1885.3" r="3.7" fill="#111" stroke="none" stroke-width="0" />
<circle cx="3343.2" cy="1893.3" r="3.7" fill="#111" stroke="none" stroke-width="0" />
<circle cx="3357.7" cy="1900.1" r="3.7" fill="#111" stroke="none" stroke-width="0" />
<circle cx="3374.9" cy="1908.1" r="3.7" fill="#111" stroke="none" stroke-width="0" />
<circle cx="3384.9" cy="1912.7" r="3.7" fill="#111" stroke="none" stroke-width="0" />
<circle cx="3406.7" cy="1922.8" r="3.7" fill="#111" stroke="none" stroke-width="0" />
<circle cx="3416.6" cy="1927.4" r="3.7" fill="#111" stroke="none" stroke-width="0" />
<circle cx="3438.4" cy="1937.6" r="3.7" fill="#111" stroke="none" stroke-width="0" />
<circle cx="3448.4" cy="1942.2" r="3.7" fill="#111" stroke="none" stroke-width="0" />
<circle cx="3458.4" cy="1946.8" r="3.7" fill="#111" stroke="none" stroke-width="0" />
<circle cx="3475.6" cy="1954.8" r="3.7" fill="#111" stroke="none" stroke-width="0" />
<circle cx="3497.4" cy="1964.9" r="3.7" fill="#111" stroke="none" stroke-width="0" />
<circle cx="3511.9" cy="1971.7" r="3.7" fill="#111" stroke="none" stroke-width="0" />
<line x1="2875.0" y1="1674.0" x2="3528.5" y2="1977.4" stroke="#6e6e68" stroke-width="3.6" />
<circle cx="2749.7" cy="1974.1" r="3.7" fill="#111" stroke="none" stroke-width="0" />
<circle cx="2759.8" cy="1978.6" r="3.7" fill="#111" stroke="none" stroke-width="0" />
<circle cx="2769.8" cy="1983.1" r="3.7" fill="#111" stroke="none" stroke-width="0" />
<circle cx="2784.4" cy="1989.7" r="3.7" fill="#111" stroke="none" stroke-width="0" />
<circle cx="2799.0" cy="1996.2" r="3.7" fill="#111" stroke="none" stroke-width="0" />
<circle cx="2816.3" cy="2004.0" r="3.7" fill="#111" stroke="none" stroke-width="0" />
<circle cx="2830.9" cy="2010.6" r="3.7" fill="#111" stroke="none" stroke-width="0" />
<circle cx="2840.9" cy="2015.1" r="3.7" fill="#111" stroke="none" stroke-width="0" />
<circle cx="2855.5" cy="2021.7" r="3.7" fill="#111" stroke="none" stroke-width="0" />
<circle cx="2877.4" cy="2031.5" r="3.7" fill="#111" stroke="none" stroke-width="0" />
<circle cx="2894.8" cy="2039.3" r="3.7" fill="#111" stroke="none" stroke-width="0" />
<circle cx="2909.4" cy="2045.8" r="3.7" fill="#111" stroke="none" stroke-width="0" />
<circle cx="2931.2" cy="2055.7" r="3.7" fill="#111" stroke="none" stroke-width="0" />
<circle cx="2945.8" cy="2062.2" r="3.7" fill="#111" stroke="none" stroke-width="0" />
<circle cx="2963.2" cy="2070.0" r="3.7" fill="#111" stroke="none" stroke-width="0" />
<circle cx="2973.2" cy="2074.5" r="3.7" fill="#111" stroke="none" stroke-width="0" />
<circle cx="2995.1" cy="2084.4" r="3.7" fill="#111" stroke="none" stroke-width="0" />
<line x1="2745.0" y1="1970.0" x2="3012.0" y2="2090.0" stroke="#6e6e68" stroke-width="3.6" />
<line x1="2830.0" y1="1843.0" x2="3024.0" y2="1930.0" stroke="#66665f" stroke-width="2.6" />
<line x1="2827.0" y1="1849.0" x2="3021.0" y2="1936.0" stroke="#66665f" stroke-width="2.6" />
<line x1="3006.0" y1="1921.0" x2="3207.0" y2="2003.0" stroke="#66665f" stroke-width="2.6" />
<line x1="3004.0" y1="1927.0" x2="3204.0" y2="2009.0" stroke="#66665f" stroke-width="2.6" />
<line x1="3681.0" y1="1778.0" x2="3737.0" y2="1645.6" stroke="#77776f" stroke-width="3" />
<line x1="3689.0" y1="1780.0" x2="3745.5" y2="1647.8" stroke="#77776f" stroke-width="3" />
<line x1="3717.6" y1="1791.0" x2="3803.0" y2="1699.0" stroke="#77776f" stroke-width="3" />
<line x1="3803.0" y1="1699.0" x2="3842.0" y2="1765.5" stroke="#77776f" stroke-width="3" />
<line x1="3722.0" y1="1797.0" x2="3799.0" y2="1722.0" stroke="#77776f" stroke-width="3" />
<line x1="3799.0" y1="1722.0" x2="3842.0" y2="1793.0" stroke="#77776f" stroke-width="3" />
<line x1="3812.0" y1="1700.0" x2="3842.0" y2="1748.0" stroke="#77776f" stroke-width="3" />
<polygon points="3678.0,1779.0 3683.0,1762.0 3690.0,1764.0 3686.0,1782.0" fill="none" stroke="#77776f" stroke-width="1.5" stroke-linejoin="round" />
<line x1="3509.0" y1="1984.5" x2="3578.4" y2="2016.7" stroke="#66665f" stroke-width="3" />
<line x1="3558.0" y1="2081.0" x2="3637.0" y2="2030.0" stroke="#66665f" stroke-width="3" />
<line x1="3556.0" y1="2076.0" x2="3634.0" y2="2025.5" stroke="#66665f" stroke-width="3" />
<line x1="3765.0" y1="2040.0" x2="3797.0" y2="2060.0" stroke="#66665f" stroke-width="3" />
<circle cx="3526.7" cy="1987.2" r="3.6" fill="#a86a2c" stroke="#6b4318" stroke-width="0.8" />
<circle cx="3529.4" cy="1993.5" r="3.6" fill="#a86a2c" stroke="#6b4318" stroke-width="0.8" />
<circle cx="3545.4" cy="1996.1" r="3.6" fill="#a86a2c" stroke="#6b4318" stroke-width="0.8" />
<circle cx="3562.4" cy="2003.3" r="3.6" fill="#a86a2c" stroke="#6b4318" stroke-width="0.8" />
<circle cx="3612.3" cy="2043.4" r="3.6" fill="#a86a2c" stroke="#6b4318" stroke-width="0.8" />
<circle cx="3615.0" cy="2049.7" r="3.6" fill="#a86a2c" stroke="#6b4318" stroke-width="0.8" />
<circle cx="3600.0" cy="2051.5" r="3.6" fill="#a86a2c" stroke="#6b4318" stroke-width="0.8" />
<circle cx="3589.0" cy="2056.8" r="3.6" fill="#a86a2c" stroke="#6b4318" stroke-width="0.8" />
<circle cx="3566.8" cy="2072.0" r="3.6" fill="#a86a2c" stroke="#6b4318" stroke-width="0.8" />
<circle cx="3558.8" cy="2077.3" r="3.6" fill="#a86a2c" stroke="#6b4318" stroke-width="0.8" />
<circle cx="3750.0" cy="1867.0" r="3.6" fill="#a86a2c" stroke="#6b4318" stroke-width="0.8" />
<circle cx="3754.0" cy="1884.0" r="3.6" fill="#a86a2c" stroke="#6b4318" stroke-width="0.8" />
<circle cx="3789.0" cy="2028.0" r="3.6" fill="#a86a2c" stroke="#6b4318" stroke-width="0.8" />
<circle cx="3793.0" cy="2046.0" r="3.6" fill="#a86a2c" stroke="#6b4318" stroke-width="0.8" />
<circle cx="3744.0" cy="1846.0" r="3.6" fill="#a86a2c" stroke="#6b4318" stroke-width="0.8" />
<circle cx="3748.0" cy="1872.0" r="3.6" fill="#a86a2c" stroke="#6b4318" stroke-width="0.8" />
<circle cx="3727.0" cy="1808.0" r="3.2" fill="#111" stroke="none" stroke-width="0" />
<circle cx="3727.5" cy="1853.5" r="3.2" fill="#111" stroke="none" stroke-width="0" />
<circle cx="3733.0" cy="1861.0" r="3.2" fill="#111" stroke="none" stroke-width="0" />
<circle cx="3791.0" cy="2056.0" r="3.2" fill="#111" stroke="none" stroke-width="0" />
<circle cx="2192.5" cy="1029.5" r="11.8" fill="none" stroke="#e019c9" stroke-width="1.3" />
<circle cx="2257.5" cy="982.0" r="11.8" fill="none" stroke="#e019c9" stroke-width="1.3" />
<circle cx="2324.0" cy="951.0" r="11.8" fill="none" stroke="#e019c9" stroke-width="1.3" />
<circle cx="2375.0" cy="960.5" r="11.8" fill="none" stroke="#e019c9" stroke-width="1.3" />
<circle cx="2449.0" cy="993.0" r="11.8" fill="none" stroke="#e019c9" stroke-width="1.3" />
<circle cx="2523.0" cy="1027.0" r="11.8" fill="none" stroke="#e019c9" stroke-width="1.3" />
<circle cx="2596.5" cy="1059.0" r="11.8" fill="none" stroke="#e019c9" stroke-width="1.3" />
<circle cx="2671.0" cy="1093.0" r="11.8" fill="none" stroke="#e019c9" stroke-width="1.3" />
<circle cx="2745.0" cy="1126.0" r="11.8" fill="none" stroke="#e019c9" stroke-width="1.3" />
<circle cx="2780.0" cy="1175.0" r="11.8" fill="none" stroke="#e019c9" stroke-width="1.3" />
<circle cx="2849.0" cy="1244.0" r="11.8" fill="none" stroke="#e019c9" stroke-width="1.3" />
<circle cx="2954.0" cy="1237.0" r="11.8" fill="none" stroke="#e019c9" stroke-width="1.3" />
<circle cx="2922.5" cy="1278.0" r="11.8" fill="none" stroke="#e019c9" stroke-width="1.3" />
<circle cx="2995.0" cy="1313.0" r="11.8" fill="none" stroke="#e019c9" stroke-width="1.3" />
<circle cx="3071.0" cy="1344.0" r="11.8" fill="none" stroke="#e019c9" stroke-width="1.3" />
<circle cx="3145.0" cy="1377.0" r="11.8" fill="none" stroke="#e019c9" stroke-width="1.3" />
<circle cx="3218.5" cy="1410.5" r="11.8" fill="none" stroke="#e019c9" stroke-width="1.3" />
<circle cx="3291.0" cy="1442.5" r="11.8" fill="none" stroke="#e019c9" stroke-width="1.3" />
<circle cx="3366.0" cy="1476.0" r="11.8" fill="none" stroke="#e019c9" stroke-width="1.3" />
<circle cx="3548.5" cy="1534.0" r="11.8" fill="none" stroke="#e019c9" stroke-width="1.3" />
<circle cx="3587.5" cy="1575.0" r="11.8" fill="none" stroke="#e019c9" stroke-width="1.3" />
<circle cx="3662.0" cy="1608.5" r="11.8" fill="none" stroke="#e019c9" stroke-width="1.3" />
<circle cx="3654.5" cy="1667.5" r="11.8" fill="none" stroke="#e019c9" stroke-width="1.3" />
<circle cx="3627.5" cy="1747.5" r="11.8" fill="none" stroke="#e019c9" stroke-width="1.3" />
<circle cx="3688.5" cy="1782.5" r="11.8" fill="none" stroke="#e019c9" stroke-width="1.3" />
<circle cx="3721.0" cy="1814.0" r="11.8" fill="none" stroke="#e019c9" stroke-width="1.3" />
<circle cx="3047.0" cy="1750.0" r="11.8" fill="none" stroke="#e019c9" stroke-width="1.3" />
<circle cx="3120.0" cy="1783.5" r="11.8" fill="none" stroke="#e019c9" stroke-width="1.3" />
<circle cx="3138.5" cy="1807.5" r="11.8" fill="none" stroke="#e019c9" stroke-width="1.3" />
<circle cx="3143.0" cy="1790.0" r="11.8" fill="none" stroke="#e019c9" stroke-width="1.3" />
<circle cx="3195.0" cy="1818.5" r="11.8" fill="none" stroke="#e019c9" stroke-width="1.3" />
<circle cx="3268.5" cy="1851.0" r="11.8" fill="none" stroke="#e019c9" stroke-width="1.3" />
<circle cx="3342.5" cy="1884.0" r="11.8" fill="none" stroke="#e019c9" stroke-width="1.3" />
<circle cx="3417.0" cy="1917.5" r="11.8" fill="none" stroke="#e019c9" stroke-width="1.3" />
<circle cx="3460.0" cy="1945.0" r="11.8" fill="none" stroke="#e019c9" stroke-width="1.3" />
<circle cx="3455.0" cy="1925.0" r="11.8" fill="none" stroke="#e019c9" stroke-width="1.3" />
<circle cx="3513.5" cy="1960.0" r="11.8" fill="none" stroke="#e019c9" stroke-width="1.3" />
<circle cx="3536.0" cy="2017.5" r="11.8" fill="none" stroke="#e019c9" stroke-width="1.3" />
<circle cx="3542.8" cy="1999.7" r="11.8" fill="none" stroke="#e019c9" stroke-width="1.3" />
<circle cx="3585.6" cy="2054.0" r="11.8" fill="none" stroke="#e019c9" stroke-width="1.3" />
<circle cx="3586.5" cy="2063.0" r="11.8" fill="none" stroke="#e019c9" stroke-width="1.3" />
<circle cx="3567.7" cy="2070.0" r="11.8" fill="none" stroke="#e019c9" stroke-width="1.3" />
<circle cx="3568.6" cy="2078.0" r="11.8" fill="none" stroke="#e019c9" stroke-width="1.3" />
<circle cx="3028.5" cy="1899.0" r="11.8" fill="none" stroke="#e019c9" stroke-width="1.3" />
<circle cx="3016.0" cy="1925.0" r="11.8" fill="none" stroke="#e019c9" stroke-width="1.3" />
<circle cx="3006.0" cy="1952.5" r="11.8" fill="none" stroke="#e019c9" stroke-width="1.3" />
<circle cx="2231.5" cy="1491.5" r="11.8" fill="none" stroke="#e019c9" stroke-width="1.3" />
<circle cx="2305.0" cy="1525.0" r="11.8" fill="none" stroke="#e019c9" stroke-width="1.3" />
<circle cx="2274.0" cy="1598.5" r="11.8" fill="none" stroke="#e019c9" stroke-width="1.3" />
<circle cx="2247.5" cy="1658.5" r="11.8" fill="none" stroke="#e019c9" stroke-width="1.3" />
<circle cx="2191.5" cy="1670.0" r="11.8" fill="none" stroke="#e019c9" stroke-width="1.3" />
<circle cx="2200.0" cy="1512.5" r="11.8" fill="none" stroke="#e019c9" stroke-width="1.3" />
<circle cx="2215.0" cy="1607.5" r="11.8" fill="none" stroke="#e019c9" stroke-width="1.3" />
<circle cx="2212.0" cy="1604.0" r="11.8" fill="none" stroke="#e019c9" stroke-width="1.3" />
<circle cx="2899.0" cy="1685.0" r="11.8" fill="none" stroke="#e019c9" stroke-width="1.3" />
<circle cx="2973.5" cy="1718.5" r="11.8" fill="none" stroke="#e019c9" stroke-width="1.3" />
<circle cx="2843.0" cy="1731.0" r="11.8" fill="none" stroke="#e019c9" stroke-width="1.3" />
<circle cx="2810.0" cy="1805.0" r="11.8" fill="none" stroke="#e019c9" stroke-width="1.3" />
<circle cx="2777.0" cy="1879.0" r="11.8" fill="none" stroke="#e019c9" stroke-width="1.3" />
<circle cx="2736.5" cy="1967.5" r="11.8" fill="none" stroke="#e019c9" stroke-width="1.3" />
<circle cx="2808.5" cy="2000.0" r="11.8" fill="none" stroke="#e019c9" stroke-width="1.3" />
<circle cx="2882.5" cy="2032.5" r="11.8" fill="none" stroke="#e019c9" stroke-width="1.3" />
<circle cx="2886.0" cy="2028.0" r="11.8" fill="none" stroke="#e019c9" stroke-width="1.3" />
<circle cx="2900.0" cy="2022.5" r="11.8" fill="none" stroke="#e019c9" stroke-width="1.3" />
<circle cx="2955.0" cy="2067.5" r="11.8" fill="none" stroke="#e019c9" stroke-width="1.3" />
<circle cx="3002.5" cy="1954.0" r="11.8" fill="none" stroke="#e019c9" stroke-width="1.3" />
<circle cx="3062.0" cy="43.0" r="11.8" fill="none" stroke="#e019c9" stroke-width="1.3" />
<circle cx="3135.0" cy="75.5" r="11.8" fill="none" stroke="#e019c9" stroke-width="1.3" />
<circle cx="3208.5" cy="110.5" r="11.8" fill="none" stroke="#e019c9" stroke-width="1.3" />
<circle cx="3282.5" cy="145.5" r="11.8" fill="none" stroke="#e019c9" stroke-width="1.3" />
<circle cx="3356.0" cy="179.5" r="11.8" fill="none" stroke="#e019c9" stroke-width="1.3" />
<circle cx="3457.0" cy="158.0" r="11.8" fill="none" stroke="#e019c9" stroke-width="1.3" />
<circle cx="3498.5" cy="255.5" r="11.8" fill="none" stroke="#e019c9" stroke-width="1.3" />
<circle cx="3721.0" cy="355.5" r="11.8" fill="none" stroke="#e019c9" stroke-width="1.3" />
<circle cx="3719.0" cy="353.0" r="11.8" fill="none" stroke="#e019c9" stroke-width="1.3" />
<circle cx="3792.5" cy="394.0" r="11.8" fill="none" stroke="#e019c9" stroke-width="1.3" />
<circle cx="3790.0" cy="392.0" r="11.8" fill="none" stroke="#e019c9" stroke-width="1.3" />
<circle cx="3756.0" cy="313.0" r="11.8" fill="none" stroke="#e019c9" stroke-width="1.3" />
<circle cx="3741.0" cy="322.0" r="11.8" fill="none" stroke="#e019c9" stroke-width="1.3" />
<circle cx="3813.5" cy="278.0" r="11.8" fill="none" stroke="#e019c9" stroke-width="1.3" />
<circle cx="3771.0" cy="895.5" r="11.8" fill="none" stroke="#e019c9" stroke-width="1.3" />
<circle cx="3772.0" cy="927.0" r="11.8" fill="none" stroke="#e019c9" stroke-width="1.3" />
<circle cx="3816.0" cy="996.5" r="11.8" fill="none" stroke="#e019c9" stroke-width="1.3" />
<circle cx="3722.0" cy="1673.0" r="11.8" fill="none" stroke="#e019c9" stroke-width="1.3" />
<circle cx="3735.0" cy="1678.0" r="11.8" fill="none" stroke="#e019c9" stroke-width="1.3" />
<circle cx="3712.0" cy="1668.0" r="11.8" fill="none" stroke="#e019c9" stroke-width="1.3" />
<circle cx="3740.0" cy="1663.0" r="11.8" fill="none" stroke="#e019c9" stroke-width="1.3" />
<circle cx="3708.0" cy="1725.0" r="11.8" fill="none" stroke="#e019c9" stroke-width="1.3" />
<circle cx="3712.0" cy="1730.0" r="11.8" fill="none" stroke="#e019c9" stroke-width="1.3" />
<circle cx="3716.0" cy="1722.0" r="11.8" fill="none" stroke="#e019c9" stroke-width="1.3" />
<circle cx="3752.0" cy="1755.0" r="11.8" fill="none" stroke="#e019c9" stroke-width="1.3" />
<circle cx="3738.0" cy="1768.0" r="11.8" fill="none" stroke="#e019c9" stroke-width="1.3" />
<circle cx="3766.0" cy="1772.0" r="11.8" fill="none" stroke="#e019c9" stroke-width="1.3" />
<circle cx="3786.0" cy="1718.0" r="11.8" fill="none" stroke="#e019c9" stroke-width="1.3" />
<circle cx="3826.0" cy="1728.0" r="11.8" fill="none" stroke="#e019c9" stroke-width="1.3" />
<circle cx="3810.0" cy="1758.0" r="11.8" fill="none" stroke="#e019c9" stroke-width="1.3" />
<circle cx="3833.0" cy="1752.0" r="11.8" fill="none" stroke="#e019c9" stroke-width="1.3" />
<circle cx="3836.0" cy="1788.0" r="11.8" fill="none" stroke="#e019c9" stroke-width="1.3" />
<circle cx="3770.0" cy="1808.0" r="11.8" fill="none" stroke="#e019c9" stroke-width="1.3" />
<circle cx="3747.0" cy="2064.0" r="11.8" fill="none" stroke="#e019c9" stroke-width="1.3" />
<circle cx="3820.0" cy="2075.0" r="11.8" fill="none" stroke="#e019c9" stroke-width="1.3" />
<polyline points="2122.0,406.0 2170.0,428.0 2389.0,530.5 2232.5,733.5 2170.0,813.0 2122.0,870.0" fill="none" stroke="#e019c9" stroke-width="1.3" stroke-linejoin="round" stroke-dasharray="6 5"/>
<line x1="2654.0" y1="33.0" x2="2487.5" y2="384.5" stroke="#e019c9" stroke-width="1.4" stroke-dasharray="9 8"/>
<line x1="2692.5" y1="33.0" x2="2517.5" y2="398.0" stroke="#e019c9" stroke-width="1.4" stroke-dasharray="9 8"/>
<line x1="2727.5" y1="43.0" x2="2540.0" y2="395.5" stroke="#e019c9" stroke-width="1.4" stroke-dasharray="9 8"/>
<polyline points="2642.7,65.7 2636.7,68.7 2640.7,72.7 2631.7,75.7 2634.7,79.7" fill="none" stroke="#e019c9" stroke-width="1.2" stroke-linejoin="round" />
<polyline points="2634.4,83.2 2628.4,86.2 2632.4,90.2 2623.4,93.2 2626.4,97.2" fill="none" stroke="#e019c9" stroke-width="1.2" stroke-linejoin="round" />
<polyline points="2612.7,128.9 2606.7,131.9 2610.7,135.9 2601.7,138.9 2604.7,142.9" fill="none" stroke="#e019c9" stroke-width="1.2" stroke-linejoin="round" />
<polyline points="2604.4,146.5 2598.4,149.5 2602.4,153.5 2593.4,156.5 2596.4,160.5" fill="none" stroke="#e019c9" stroke-width="1.2" stroke-linejoin="round" />
<polyline points="2596.1,164.1 2590.1,167.1 2594.1,171.1 2585.1,174.1 2588.1,178.1" fill="none" stroke="#e019c9" stroke-width="1.2" stroke-linejoin="round" />
<polyline points="2586.9,183.4 2580.9,186.4 2584.9,190.4 2575.9,193.4 2578.9,197.4" fill="none" stroke="#e019c9" stroke-width="1.2" stroke-linejoin="round" />
<polyline points="2554.4,252.0 2548.4,255.0 2552.4,259.0 2543.4,262.0 2546.4,266.0" fill="none" stroke="#e019c9" stroke-width="1.2" stroke-linejoin="round" />
<polyline points="2546.1,269.5 2540.1,272.5 2544.1,276.5 2535.1,279.5 2538.1,283.5" fill="none" stroke="#e019c9" stroke-width="1.2" stroke-linejoin="round" />
<circle cx="2680.2" cy="58.5" r="3.5" fill="#e9efe4" stroke="#e019c9" stroke-width="1.3" />
<circle cx="2666.2" cy="87.8" r="3.5" fill="#e9efe4" stroke="#e019c9" stroke-width="1.3" />
<circle cx="2652.2" cy="117.0" r="3.5" fill="#e9efe4" stroke="#e019c9" stroke-width="1.3" />
<circle cx="2638.2" cy="146.2" r="3.5" fill="#e9efe4" stroke="#e019c9" stroke-width="1.3" />
<circle cx="2624.2" cy="175.3" r="3.5" fill="#e9efe4" stroke="#e019c9" stroke-width="1.3" />
<circle cx="2610.2" cy="204.5" r="3.5" fill="#e9efe4" stroke="#e019c9" stroke-width="1.3" />
<circle cx="2596.2" cy="233.8" r="3.5" fill="#e9efe4" stroke="#e019c9" stroke-width="1.3" />
<circle cx="2582.2" cy="262.9" r="3.5" fill="#e9efe4" stroke="#e019c9" stroke-width="1.3" />
<circle cx="2568.2" cy="292.1" r="3.5" fill="#e9efe4" stroke="#e019c9" stroke-width="1.3" />
<circle cx="2554.2" cy="321.4" r="3.5" fill="#e9efe4" stroke="#e019c9" stroke-width="1.3" />
<circle cx="2540.2" cy="350.6" r="3.5" fill="#e9efe4" stroke="#e019c9" stroke-width="1.3" />
<circle cx="2526.2" cy="379.8" r="3.5" fill="#e9efe4" stroke="#e019c9" stroke-width="1.3" />
<circle cx="2718.1" cy="60.6" r="3.5" fill="#e9efe4" stroke="#e019c9" stroke-width="1.3" />
<circle cx="2690.0" cy="113.5" r="3.5" fill="#e9efe4" stroke="#e019c9" stroke-width="1.3" />
<circle cx="2661.9" cy="166.4" r="3.5" fill="#e9efe4" stroke="#e019c9" stroke-width="1.3" />
<circle cx="2633.8" cy="219.2" r="3.5" fill="#e9efe4" stroke="#e019c9" stroke-width="1.3" />
<circle cx="2605.6" cy="272.1" r="3.5" fill="#e9efe4" stroke="#e019c9" stroke-width="1.3" />
<circle cx="2577.5" cy="325.0" r="3.5" fill="#e9efe4" stroke="#e019c9" stroke-width="1.3" />
<circle cx="2553.1" cy="370.8" r="3.5" fill="#e9efe4" stroke="#e019c9" stroke-width="1.3" />
<polyline points="3458.0,862.0 3501.0,884.5 3528.5,899.0 3578.0,927.0 3628.0,955.0 3665.5,966.0 3695.5,973.0 3725.5,980.0 3805.5,995.5" fill="none" stroke="#e019c9" stroke-width="1.3" stroke-linejoin="round" stroke-dasharray="14 6 3 6"/>
<circle cx="3501.0" cy="884.5" r="3.5" fill="#e9efe4" stroke="#e019c9" stroke-width="1.3" />
<circle cx="3528.5" cy="899.0" r="3.5" fill="#e9efe4" stroke="#e019c9" stroke-width="1.3" />
<circle cx="3578.0" cy="927.0" r="3.5" fill="#e9efe4" stroke="#e019c9" stroke-width="1.3" />
<circle cx="3628.0" cy="955.0" r="3.5" fill="#e9efe4" stroke="#e019c9" stroke-width="1.3" />
<circle cx="3665.5" cy="966.0" r="3.5" fill="#e9efe4" stroke="#e019c9" stroke-width="1.3" />
<circle cx="3695.5" cy="973.0" r="3.5" fill="#e9efe4" stroke="#e019c9" stroke-width="1.3" />
<circle cx="3725.5" cy="980.0" r="3.5" fill="#e9efe4" stroke="#e019c9" stroke-width="1.3" />
<circle cx="3092.0" cy="1065.0" r="202.5" fill="none" stroke="#e019c9" stroke-width="2.6" stroke-dasharray="16 6"/>
<circle cx="3048.5" cy="1101.5" r="16" fill="none" stroke="#e9a0e0" stroke-width="1.6" />
<line x1="3048.5" y1="1090.0" x2="3048.5" y2="1107.0" stroke="#e9a0e0" stroke-width="1.8" />
<line x1="3044.0" y1="1111.5" x2="3053.0" y2="1111.5" stroke="#e9a0e0" stroke-width="1.6" />
<rect x="2205" y="1478.5" width="16" height="16" fill="none" stroke="#e019c9" stroke-width="1.300"/><text x="2213" y="1491.5" font-size="13" fill="#e019c9" text-anchor="middle" font-family="Liberation Mono, monospace">i</text>
<rect x="2340.5" y="1809" width="16" height="16" fill="none" stroke="#e019c9" stroke-width="1.300"/><text x="2348.5" y="1822" font-size="13" fill="#e019c9" text-anchor="middle" font-family="Liberation Mono, monospace">i</text>
<rect x="3388" y="1690" width="16" height="16" fill="none" stroke="#e019c9" stroke-width="1.300"/><text x="3396" y="1703" font-size="13" fill="#e019c9" text-anchor="middle" font-family="Liberation Mono, monospace">i</text>
<circle cx="3281.0" cy="286.0" r="8" fill="none" stroke="#e019c9" stroke-width="1.3" /><path d="M3281.0 278.0L3263.0 279.4L3275.9 292.1" fill="none" stroke="#e019c9" stroke-width="1.300"/>
<circle cx="3221.0" cy="407.0" r="8" fill="none" stroke="#e019c9" stroke-width="1.3" /><path d="M3221.0 415.0L3239.0 413.6L3226.1 400.9" fill="none" stroke="#e019c9" stroke-width="1.300"/>
<circle cx="2842.0" cy="824.0" r="8" fill="none" stroke="#e019c9" stroke-width="1.3" /><path d="M2842.0 816.0L2824.0 817.4L2836.9 830.1" fill="none" stroke="#e019c9" stroke-width="1.300"/>
<circle cx="3210.0" cy="976.5" r="8" fill="none" stroke="#e019c9" stroke-width="1.3" /><path d="M3210.0 984.5L3228.0 983.1L3215.1 970.4" fill="none" stroke="#e019c9" stroke-width="1.300"/>
<circle cx="3694.0" cy="868.0" r="8" fill="none" stroke="#e019c9" stroke-width="1.3" /><path d="M3701.5 865.3L3694.0 848.8L3686.5 865.3" fill="none" stroke="#e019c9" stroke-width="1.300"/>
<circle cx="3746.0" cy="996.0" r="8" fill="none" stroke="#e019c9" stroke-width="1.3" /><path d="M3738.0 996.0L3739.4 1014.0L3752.1 1001.1" fill="none" stroke="#e019c9" stroke-width="1.300"/>
<line x1="2469.8" y1="34.0" x2="2469.8" y2="2090.0" stroke="#111" stroke-width="1.6" />
<line x1="3397.3" y1="34.0" x2="3397.3" y2="2090.0" stroke="#111" stroke-width="1.6" />
<line x1="2122.0" y1="1276.7" x2="3842.0" y2="1276.7" stroke="#111" stroke-width="1.6" />
<text transform="translate(2472,75) rotate(90)" font-size="7.800" fill="#111">4° 6.000' E</text><text transform="translate(3400,75) rotate(90)" font-size="7.800" fill="#111">4° 7.000' E</text>
<line x1="2529.8" y1="33.0" x2="2864.7" y2="133.0" stroke="#6a6a66" stroke-width="1.8" />
<line x1="2864.7" y1="133.0" x2="3421.0" y2="305.0" stroke="#6a6a66" stroke-width="1.3" stroke-dasharray="7 5"/>
<line x1="3421.0" y1="305.0" x2="3842.0" y2="435.0" stroke="#6a6a66" stroke-width="1.3" stroke-dasharray="7 3"/>
<path d="M2559.0 46.9L2568.1 44.4L2561.9 37.4M2614.6 63.5L2623.7 61.0L2617.5 54.0M2670.2 80.1L2679.3 77.6L2673.0 70.6M2725.8 96.7L2734.9 94.2L2728.6 87.1M2781.3 113.3L2790.4 110.8L2784.2 103.7M2836.9 129.9L2846.0 127.4L2839.8 120.3" fill="none" stroke="#6a6a66" stroke-width="1.200"/>
<line x1="2122.0" y1="531.8" x2="3650.7" y2="1276.7" stroke="#6a6a66" stroke-width="2" />
<line x1="3650.7" y1="1276.7" x2="3842.0" y2="1370.0" stroke="#6a6a66" stroke-width="1.3" stroke-dasharray="7 5"/>
<path d="M2166.6 559.1L2175.9 558.1L2170.9 550.1M2172.8 562.1L2182.2 561.1L2177.2 553.1M2213.3 581.9L2222.7 580.9L2217.7 572.9M2219.6 584.9L2229.0 583.9L2224.0 575.9M2260.0 604.6L2269.4 603.6L2264.4 595.6M2266.3 607.7L2275.7 606.7L2270.7 598.7M2306.8 627.4L2316.2 626.4L2311.2 618.4M2313.1 630.5L2322.5 629.5L2317.5 621.5M2353.5 650.2L2362.9 649.2L2357.9 641.2M2359.8 653.3L2369.2 652.3L2364.2 644.3M2400.3 673.0L2409.7 672.0L2404.7 664.0M2406.6 676.0L2416.0 675.0L2411.0 667.0M2447.0 695.7L2456.4 694.8L2451.4 686.8M2453.3 698.8L2462.7 697.8L2457.7 689.8M2493.8 718.5L2503.2 717.5L2498.2 709.5M2500.1 721.6L2509.4 720.6L2504.4 712.6M2540.5 741.3L2549.9 740.3L2544.9 732.3M2546.8 744.4L2556.2 743.4L2551.2 735.4M2587.3 764.1L2596.6 763.1L2591.6 755.1M2593.6 767.1L2602.9 766.2L2597.9 758.2M2634.0 786.9L2643.4 785.9L2638.4 777.9M2640.3 789.9L2649.7 788.9L2644.7 780.9M2680.8 809.6L2690.1 808.6L2685.1 800.6M2687.1 812.7L2696.4 811.7L2691.4 803.7M2727.5 832.4L2736.9 831.4L2731.9 823.4M2733.8 835.5L2743.2 834.5L2738.2 826.5M2774.2 855.2L2783.6 854.2L2778.6 846.2M2780.5 858.3L2789.9 857.3L2784.9 849.3M2821.0 878.0L2830.4 877.0L2825.4 869.0M2827.3 881.0L2836.7 880.0L2831.7 872.0M2867.7 900.7L2877.1 899.8L2872.1 891.8M2874.0 903.8L2883.4 902.8L2878.4 894.8M2914.5 923.5L2923.9 922.5L2918.9 914.5M2920.8 926.6L2930.2 925.6L2925.2 917.6M2961.2 946.3L2970.6 945.3L2965.6 937.3M2967.5 949.4L2976.9 948.4L2971.9 940.4" fill="none" stroke="#6a6a66" stroke-width="1.200"/>
<path d="M3020.6 975.2L3029.9 974.2L3024.9 966.2M3026.9 978.3L3036.2 977.3L3031.2 969.3M3072.7 1000.6L3082.1 999.6L3077.1 991.6M3079.0 1003.7L3088.4 1002.7L3083.4 994.7M3124.8 1026.0L3134.2 1025.0L3129.2 1017.0M3131.1 1029.1L3140.5 1028.1L3135.5 1020.1M3177.0 1051.4L3186.4 1050.4L3181.4 1042.4M3183.3 1054.5L3192.7 1053.5L3187.7 1045.5M3229.1 1076.8L3238.5 1075.8L3233.5 1067.8M3235.4 1079.9L3244.8 1078.9L3239.8 1070.9M3281.3 1102.2L3290.6 1101.3L3285.6 1093.3M3287.6 1105.3L3296.9 1104.3L3291.9 1096.3M3333.4 1127.6L3342.8 1126.7L3337.8 1118.7M3339.7 1130.7L3349.1 1129.7L3344.1 1121.7M3385.5 1153.1L3394.9 1152.1L3389.9 1144.1M3391.8 1156.1L3401.2 1155.1L3396.2 1147.1M3437.7 1178.5L3447.1 1177.5L3442.1 1169.5M3444.0 1181.5L3453.4 1180.5L3448.4 1172.5M3489.8 1203.9L3499.2 1202.9L3494.2 1194.9M3496.1 1206.9L3505.5 1205.9L3500.5 1197.9M3542.0 1229.3L3551.3 1228.3L3546.3 1220.3M3548.2 1232.3L3557.6 1231.4L3552.6 1223.4M3594.1 1254.7L3603.5 1253.7L3598.5 1245.7M3600.4 1257.7L3609.8 1256.8L3604.8 1248.8" fill="none" stroke="#6a6a66" stroke-width="1.200"/>
<line x1="2122.0" y1="537.0" x2="2962.0" y2="945.0" stroke="#8484e0" stroke-width="4" stroke-dasharray="11 12"/>
<circle cx="2979.6" cy="953.0" r="59.6" fill="rgba(10,104,245,0.430)" stroke="none" stroke-width="0" />
<circle cx="2979.6" cy="953.0" r="19.6" fill="#0068f0" stroke="none" stroke-width="0" />
<polygon points="2948.5,938.5 2953.0,936.0 2958.0,936.5 2968.0,941.0 3013.7,964.7 3010.0,973.7 2962.0,951.0 2953.0,944.0" fill="#6f6868" stroke="#000" stroke-width="2" stroke-linejoin="round" />
<line x1="2122.0" y1="554.8" x2="2981.4" y2="953.4" stroke="#fc0012" stroke-width="4.8" />
<line x1="2969.6" y1="63.0" x2="3770.0" y2="1038.0" stroke="#111" stroke-width="2.6" />
<polyline points="3143.0,1687.0 2970.8,1976.0 2964.7,2003.0" fill="none" stroke="#111" stroke-width="2.4" stroke-linejoin="round" />
<line x1="3842.0" y1="764.4" x2="3794.7" y2="754.6" stroke="#111" stroke-width="2" />
<line x1="3842.0" y1="773.6" x2="3808.0" y2="757.0" stroke="#111" stroke-width="1.2" stroke-dasharray="3 2"/>
<line x1="3771.0" y1="1043.7" x2="3765.6" y2="1062.0" stroke="#111" stroke-width="2.4" />
<polygon points="3805.5,740.0 3794.7,754.6 3820.8,759.8" fill="#3c9a2c" stroke="#123" stroke-width="1" stroke-linejoin="round" />
<polygon points="3761.0,1033.0 3767.0,1029.9 3784.6,1054.4 3778.5,1059.6" fill="#3c9a2c" stroke="#123" stroke-width="1" stroke-linejoin="round" />
<polygon points="2950.5,1992.2 2970.8,1975.3 2964.7,2001.0" fill="#3c9a2c" stroke="#123" stroke-width="1" stroke-linejoin="round" />
<path d="M2405.0 183H2424.0M2408.0 183Q2410.0 169 2419.0 166L2421.0 183Z" fill="#5fe04a" stroke="#222" stroke-width="1"/><path d="M2416.0 164L2422.0 159L2423.0 165Z" fill="#111"/><path d="M2415.0 183.0L2424.7 205.5Q2431.1 205.9 2432.9 199.8Z" fill="#5fe04a" stroke="#222" stroke-width="1"/><circle cx="2415.0" cy="183.0" r="1.800" fill="#fff" stroke="#111" stroke-width="0.900"/>
<path d="M2657 290H2669" stroke="#111" stroke-width="1.200"/><path d="M2661 290L2664 275L2668 275L2665 290Z" fill="#5fe04a" stroke="#222" stroke-width="1"/><path d="M2663 272L2668 267L2669 273Z" fill="#111"/><circle cx="2663" cy="290" r="1.800" fill="#fff" stroke="#111" stroke-width="0.900"/>
<path d="M2929 400H2941" stroke="#111" stroke-width="1.200"/><path d="M2933 400L2936 385L2940 385L2937 400Z" fill="#5fe04a" stroke="#222" stroke-width="1"/><path d="M2935 382L2940 377L2941 383Z" fill="#111"/><circle cx="2935" cy="400" r="1.800" fill="#fff" stroke="#111" stroke-width="0.900"/>
<path d="M3156.0 489H3175.0M3159.0 489Q3161.0 475 3170.0 472L3172.0 489Z" fill="#5fe04a" stroke="#222" stroke-width="1"/><path d="M3167.0 470L3173.0 465L3174.0 471Z" fill="#111"/><path d="M3166.0 489.0L3175.7 511.5Q3182.1 511.9 3183.9 505.8Z" fill="#5fe04a" stroke="#222" stroke-width="1"/><circle cx="3166.0" cy="489.0" r="1.800" fill="#fff" stroke="#111" stroke-width="0.900"/>
<path d="M2774 598H2796M2778 598L2779 588H2793L2792 598Z" fill="#f0386a" stroke="#222" stroke-width="1"/><path d="M2784.0 598.0L2793.7 620.5Q2800.1 620.9 2801.9 614.8Z" fill="#f0688a" stroke="#222" stroke-width="1"/><circle cx="2784.0" cy="598.0" r="1.800" fill="#fff" stroke="#111" stroke-width="0.900"/>
<path d="M2307 871H2329" stroke="#111" stroke-width="1.200"/><path d="M2309 866A9 9.500 0 0 1 2327 866Z" fill="#5fe04a" stroke="#222" stroke-width="0.800"/><rect x="2309" y="866" width="18" height="5" fill="#f0386a" stroke="#222" stroke-width="0.800"/><path d="M2319 854L2325 849L2326 855Z" fill="#111"/><path d="M2318.0 871.0L2327.7 893.5Q2334.1 893.9 2335.9 887.8Z" fill="#5fe04a" stroke="#222" stroke-width="1"/><circle cx="2318.0" cy="871.0" r="1.800" fill="#fff" stroke="#111" stroke-width="0.900"/>
<path d="M3430 892H3452" stroke="#111" stroke-width="1.200"/><path d="M3432 887A9 9.500 0 0 1 3450 887Z" fill="#f0386a" stroke="#222" stroke-width="0.800"/><rect x="3432" y="887" width="18" height="5" fill="#5fe04a" stroke="#222" stroke-width="0.800"/><path d="M3441 874L3444 868H3449L3446 874Z" fill="#fff" stroke="#111" stroke-width="1"/><path d="M3441.0 892.0L3450.7 914.5Q3457.1 914.9 3458.9 908.8Z" fill="#f0688a" stroke="#222" stroke-width="1"/><circle cx="3441.0" cy="892.0" r="1.800" fill="#fff" stroke="#111" stroke-width="0.900"/>
<path d="M3755 826H3777" stroke="#111" stroke-width="1.200"/><path d="M3757 821A9 9.500 0 0 1 3775 821Z" fill="#5fe04a" stroke="#222" stroke-width="0.800"/><rect x="3757" y="821" width="18" height="5" fill="#f0386a" stroke="#222" stroke-width="0.800"/><path d="M3766 808L3771 803L3772 810Z" fill="#111"/><path d="M3766.0 826.0L3775.7 848.5Q3782.1 848.9 3783.9 842.8Z" fill="#5fe04a" stroke="#222" stroke-width="1"/><circle cx="3766.0" cy="826.0" r="1.800" fill="#fff" stroke="#111" stroke-width="0.900"/>
<path d="M2802 1072H2822" stroke="#111" stroke-width="1.200"/><path d="M2805 1072Q2807 1059 2814 1057Q2819 1064 2819 1072Z" fill="#f0e040" stroke="#222" stroke-width="1"/><path d="M2812.0 1072.0L2821.7 1094.5Q2828.1 1094.9 2829.9 1088.8Z" fill="#f0e040" stroke="#222" stroke-width="1"/><circle cx="2812.0" cy="1072.0" r="1.800" fill="#fff" stroke="#111" stroke-width="0.900"/>
<path d="M2850 1148H2870" stroke="#111" stroke-width="1.200"/><path d="M2853 1148Q2855 1135 2862 1133Q2867 1140 2867 1148Z" fill="#f0e040" stroke="#222" stroke-width="1"/><path d="M2860.0 1148.0L2869.7 1170.5Q2876.1 1170.9 2877.9 1164.8Z" fill="#f0e040" stroke="#222" stroke-width="1"/><circle cx="2860.0" cy="1148.0" r="1.800" fill="#fff" stroke="#111" stroke-width="0.900"/>
<path d="M3808.0 416.0L3817.9 433.0Q3824.3 432.3 3825.0 425.9Z" fill="#f0486a" stroke="#222" stroke-width="1"/><circle cx="3808.0" cy="416.0" r="1.800" fill="#fff" stroke="#111" stroke-width="0.900"/>
<circle cx="3808.0" cy="416.0" r="3" fill="#111" stroke="none" stroke-width="0" />
<circle cx="3761.0" cy="327.0" r="3.8" fill="#a86a2c" stroke="#6b4318" stroke-width="0.8" />
<g font-size="9.300" fill="#111" stroke="#f4f6ee" stroke-width="0.900" paint-order="stroke" stroke-linejoin="round">
<text x="2375" y="186">NW 9</text>
<text x="2619" y="290">NW 11</text>
<text x="2890" y="400">NW 13</text>
<text x="2895" y="425">Nieuwe Waterweg</text>
<text x="2747" y="602">CA 8</text>
<text x="2684" y="86">107 deg</text>
<text x="2359" y="658">116 deg</text>
<text x="3121" y="491">NW 15</text>
<text x="3298" y="288">Maasentrance</text>
<text x="3298" y="320">ch 3</text>
<text x="3238" y="409">Rozenburg</text>
<text x="3238" y="441">ch 65</text>
<text x="3580" y="556">Nieuwe Waterweg</text>
<text x="3078" y="59">Nr 935</text>
<text x="3151" y="93">Nr 934</text>
<text x="3225" y="128">Nr 933</text>
<text x="3299" y="162">Nr 932</text>
<text x="3372" y="197">Nr 931</text>
<text x="3473" y="176">Nr 930</text>
<text x="3668" y="335">Nr 927</text>
<text x="3732" y="334">STG</text>
<text x="3773" y="334">Nr 921</text>
<text x="3762" y="346">RWS STG</text>
<text x="3732" y="358">Berghaven</text>
<text x="3737" y="375">Nr 926</text>
<text x="3808" y="414">Nr 925</text>
<text x="3832" y="296">Nr</text>
<text x="2265" y="873">CA 1-B 2</text>
<text x="2340" y="968">Nr 6321</text>
<text x="2391" y="978">Nr 6320</text>
<text x="2274" y="1000">Nr 6322</text>
<text x="2209" y="1047">Nr 6323</text>
<text x="2172" y="1101">6324</text>
<text x="2465" y="1011">Nr 6319</text>
<text x="2539" y="1044">Nr 6318</text>
<text x="2613" y="1076">Nr 6317</text>
<text x="2687" y="1110">Nr 6316</text>
<text x="2761" y="1143">Nr 6315</text>
<text x="2796" y="1192">Nr 6314</text>
<text x="2778" y="1074">EK 1</text>
<text x="2823" y="1150">EK 3</text>
<text x="2856" y="826">Europoort</text>
<text x="2856" y="858">ch 66</text>
<text x="2904" y="851">Calandkanaal</text>
<text x="2924" y="928">116 deg</text>
<text x="2865" y="1261">Nr 6312</text>
<text x="2864" y="1273">WESTKADE</text>
<text x="2970" y="1254">EECV WESTKADE</text>
<text x="2939" y="1294">Nr 6312</text>
<text x="2971" y="1308">EECV</text>
<text x="3377" y="894">CA 10-BD 1</text>
<text x="3227" y="977">Rozenburg</text>
<text x="3227" y="1009">ch 65</text>
<text x="3588" y="899">Breeddiep</text>
<text x="3590" y="1068">Calandkanaal</text>
<text x="3507" y="1216">116 deg</text>
<text x="3697" y="827">NW 17-BD 2</text>
<text x="3710" y="869">Rozenburg</text>
<text x="3710" y="901">ch 65</text>
<text x="3787" y="912">Nr 4737</text>
<text x="3788" y="944">Nr 5417</text>
<text x="3762" y="999">Europoort</text>
<text x="3762" y="1031">ch 66</text>
<text x="3832" y="1013">Nr</text>
<text x="3013" y="1328">Nr 6311</text>
<text x="3010" y="1339">WESTKADE</text>
<text x="3087" y="1361">Nr 6310</text>
<text x="3196" y="1370">Calandkanaal</text>
<text x="3160" y="1394">Nr 6309</text>
<text x="3234" y="1427">Nr 6308</text>
<text x="3316" y="1428">EECV MIDDENKADE</text>
<text x="3241" y="1445">MIDDENKADE</text>
<text x="3308" y="1460">Nr 6307</text>
<text x="3430" y="1483">EECV MIDDENKADE</text>
<text x="3590" y="1506">Calandkanaal</text>
<text x="3527" y="1571">OOSTKADE</text>
<text x="3594" y="1570">EECV OOSTKADE</text>
<text x="3604" y="1593">Nr 6303</text>
<text x="3678" y="1626">Nr 6302</text>
<text x="3670" y="1685">Nr 6301</text>
<text x="3706" y="1685">LAADPIER 11</text>
<text x="3754" y="1698">ADM LAADPIER 11</text>
<text x="3753" y="1668">Nr 5861</text>
<text x="3686" y="1731">LAADPIER 9</text>
<text x="3773" y="1722">PIER 14</text>
<text x="3788" y="1735">ZEESTG BUI</text>
<text x="3785" y="1748">ADM PIER 14</text>
<text x="3726" y="1746">Nr 5859</text>
<text x="3643" y="1764">Nr 6300</text>
<text x="3720" y="1780">PIER 13</text>
<text x="3767" y="1772">Nr 5857</text>
<text x="3786" y="1789">Nr 5846</text>
<text x="3798" y="1801">ZEESTG B</text>
<text x="3716" y="1800">Nr 5858</text>
<text x="3736" y="1830">Nr 5845</text>
<text x="3006" y="1735">248</text>
<text x="3063" y="1768">Nr 6249</text>
<text x="3063" y="1783">1 ERTSZIJDE</text>
<text x="3137" y="1802">Nr 6250</text>
<text x="3154" y="1823">EECV 1 ERTSZIJDE</text>
<text x="3211" y="1835">Nr 6251</text>
<text x="3285" y="1868">Nr 6252</text>
<text x="3359" y="1901">Nr 6253</text>
<text x="3433" y="1934">Nr 6254</text>
<text x="3429" y="1947">1 ERTSZIJDE</text>
<text x="3475" y="1966">EECV 1 ERTSZIJDE</text>
<text x="3529" y="1978">Nr 6255</text>
<text x="3125" y="1745">EECV</text>
<text x="3045" y="1892">Dintelhaven</text>
<text x="3045" y="1916">HBR DBA 2</text>
<text x="3005" y="1940">DBA 1</text>
<text x="3022" y="1970">HBR DBA 1</text>
<text x="3458" y="2032">Dintelhaven</text>
<text x="3530" y="2011">DBA 3</text>
<text x="3552" y="2035">DBA 3</text>
<text x="3565" y="2067">LAADPIER 1</text>
<text x="3558" y="2079">LAADPIER 2</text>
<text x="3614" y="2081">ADM LAADPIER 2</text>
<text x="3787" y="2072">Nr</text>
<text x="2173" y="1475">Nr 6330</text>
<text x="2248" y="1509">Nr 6331</text>
<text x="2322" y="1542">Nr 6332</text>
<text x="2291" y="1616">Nr 6333</text>
<text x="2229" y="1626">Nr 6338</text>
<text x="2264" y="1675">Nr 6339</text>
<text x="2208" y="1687">Nr 6340</text>
<text x="2170" y="1527">EPBOOTSTATION</text>
<text x="2915" y="1702">Nr 6247</text>
<text x="2990" y="1735">Nr 6</text>
<text x="2859" y="1748">Nr 6246</text>
<text x="2826" y="1822">Nr 6245</text>
<text x="2793" y="1896">Nr 6244</text>
<text x="2753" y="1984">Nr 6243</text>
<text x="2824" y="2017">Nr 6242</text>
<text x="2830" y="2034">2 KOLENZIJDE</text>
<text x="2897" y="2050">Nr 6241</text>
<text x="2942" y="2055">EECV 2 KOLENZIJDE</text>
<text x="2971" y="2083">Nr 6240</text>
<text x="2970" y="1919">DBA 2</text>
<text x="3800" y="1989">43</text>
<text x="3790" y="2011">av</text>
</g>
<polygon points="2904.6,1219.6 3072.3,1289.5 3120.0,1333.3 3057.2,1327.9 2889.5,1255.7" fill="#f0e63a" stroke="#222" stroke-width="1.1" stroke-linejoin="round" />
<polygon points="3162.0,1348.9 3289.0,1404.8 3325.0,1438.0 3276.2,1433.9 3149.2,1375.7" fill="#f0e63a" stroke="#222" stroke-width="1.1" stroke-linejoin="round" />
<polygon points="3387.0,1451.5 3546.0,1531.5 3591.0,1571.0 3576.0,1570.0 3371.0,1482.5" fill="#f0e63a" stroke="#222" stroke-width="1.1" stroke-linejoin="round" />
<polygon points="3493.5,1463.0 3497.0,1480.0 3497.0,1516.0 3490.0,1516.0 3490.0,1480.0" fill="#f0e63a" stroke="#222" stroke-width="1.1" stroke-linejoin="round" />
<polygon points="3626.0,1552.5 3606.0,1575.0 3625.0,1581.0" fill="#f0e63a" stroke="#222" stroke-width="1.1" stroke-linejoin="round" />
<polygon points="3051.0,2066.0 3093.5,2056.5 3207.5,2058.5 3207.5,2076.5 3093.5,2075.0" fill="#f0e63a" stroke="#222" stroke-width="1.1" stroke-linejoin="round" />
<polygon points="3447.3,1861.4 3452.3,1895.3 3452.6,2004.2 3442.3,2004.2 3442.5,1895.3" fill="#f0e63a" stroke="#222" stroke-width="1.1" stroke-linejoin="round" />
<polygon points="3561.5,2018.4 3569.5,2046.6 3552.2,2046.6" fill="#f0e63a" stroke="#222" stroke-width="1.1" stroke-linejoin="round" />
<polygon points="3807.7,1982.8 3812.0,2000.0 3817.6,2011.3 3817.6,2090.0 3798.8,2090.0 3798.8,2006.0" fill="#f0e63a" stroke="#222" stroke-width="1.1" stroke-linejoin="round" />
<polygon points="3808.6,1998.8 3835.4,1991.7 3817.6,2012.2" fill="#f0e63a" stroke="#222" stroke-width="1.1" stroke-linejoin="round" />
<polygon points="3830.6,2039.0 3835.0,2062.0 3835.0,2090.0 3826.0,2090.0 3826.0,2062.0" fill="#f0e63a" stroke="#222" stroke-width="1.1" stroke-linejoin="round" />
<polygon points="3842.0,2052.0 3839.0,2068.0 3839.0,2090.0 3842.0,2090.0" fill="#f0e63a" stroke="#222" stroke-width="1.1" stroke-linejoin="round" />
<polygon points="3713.4,1660.6 3730.5,1642.4 3755.0,1621.4 3758.7,1625.3 3740.0,1642.4" fill="#f0e63a" stroke="#222" stroke-width="1.1" stroke-linejoin="round" />
<polygon points="3691.0,1719.5 3695.0,1723.8 3713.4,1705.6 3721.0,1690.0 3707.0,1703.4" fill="#f0e63a" stroke="#222" stroke-width="1.1" stroke-linejoin="round" />
<polygon points="3724.0,1724.8 3723.0,1752.7 3710.0,1832.0 3701.6,1830.0 3714.4,1752.7" fill="#f0e63a" stroke="#222" stroke-width="1.1" stroke-linejoin="round" />
<polygon points="3812.4,309.6 3832.0,293.4 3827.8,319.0" fill="#f0e63a" stroke="#222" stroke-width="1.1" stroke-linejoin="round" />
<polygon points="2160.0,1495.0 2180.0,1499.0 2172.0,1510.0" fill="#f0e63a" stroke="#222" stroke-width="1.1" stroke-linejoin="round" />
<polygon points="2176.0,1510.0 2201.0,1513.0 2193.0,1526.0" fill="#f0e63a" stroke="#222" stroke-width="1.1" stroke-linejoin="round" />
<polygon points="2226.0,1530.0 2253.0,1533.0 2252.0,1537.0" fill="#f0e63a" stroke="#222" stroke-width="1.1" stroke-linejoin="round" />
</svg>
<div class="abs" style="left:2100px;top:1535px;width:166px;height:60px;border-radius:30px;background:#fff;box-shadow:0 3px 5px rgba(0,0,0,.13)"></div>
<div class="abs" style="left:2153px;top:1547px;font-size:28px;line-height:36px;color:#8a8a8e;white-space:nowrap">m ALAT</div>
<div id="sidebar"></div><div id="menu">
<div class="mi" style="top:325px"><svg class="ic" viewBox="0 0 64 64"><g class="g"><path d="M11 51H51"/><path d="M31.600 36.500V48M25.800 42.300L31.600 48L37.400 42.300"/><path d="M8.500 21.800L54.700 19.200L45.100 35.900H14.900Z"/><path d="M10.800 24.300L52.800 22"/><path d="M16.200 21.100L18.100 15.300L29.700 13.200Q32 13 32.900 14.700L34.200 19.800"/><path d="M6.600 28C6.600 31 9 32.500 11.500 31.500M14.500 30C16 25.500 19.500 25.500 21 29S26 32.500 28 29S33 25.500 35 29S40 32.500 42 29S46.500 26 48 30M50.500 31.500C53 32.500 56.600 31.500 56.600 28.500"/></g></svg><div class="t">DHI - NCOS</div>
<svg class="ch" viewBox="0 0 30 34"><path d="M9.200 6.500L20.800 17L9.200 27.500" class="g"/></svg>
</div>
<div class="mi" style="top:435px"><svg class="ic" viewBox="0 0 64 64"><g class="g"><path d="M26.400 17.500A5.800 5.800 0 0 1 37.600 17.500"/><path d="M21.700 35V23.300Q21.700 18.300 26.700 18.300H37.800Q42.800 18.300 42.800 23.300V35"/><path d="M16.600 40.200L32 24.800L47.600 40.200L42.800 45.300L32 35L21.300 45.300Z"/><path d="M16.600 40.200C18 48 24 54.300 32 54.300S46 48 47.600 40.200"/></g></svg><div class="t">My Vessel</div>
<svg class="ch" viewBox="0 0 30 34"><path d="M9.200 6.500L20.800 17L9.200 27.500" class="g"/></svg>
</div>
<div class="mi" style="top:545px"><svg class="ic" viewBox="0 0 64 64"><g class="g"><path d="M22 5C18 9 15 14 15 20V32C15 34.500 16.500 36 19 36H25C27.500 36 29 34.500 29 32V20C29 14 26 9 22 5Z"/><ellipse cx="22" cy="28.500" rx="2.800" ry="3.800"/><path d="M43 20C39 24 36 29 36 35V47C36 49.500 37.500 51 40 51H46C48.500 51 50 49.500 50 47V35C50 29 47 24 43 20Z"/><ellipse cx="43" cy="43.500" rx="2.800" ry="3.800"/></g></svg><div class="t">Targets</div>
<svg class="ch" viewBox="0 0 30 34"><path d="M9.200 6.500L20.800 17L9.200 27.500" class="g"/></svg>
</div>
<div class="mi" style="top:655px"><svg class="ic" viewBox="0 0 64 64"><g class="g"><path d="M36.700 30.100L17.400 11.200M25.500 11.200H17.400V19.800"/><path d="M29 30.100L48.200 11.200M39.700 11.200H48.200V19.800"/><path d="M27.700 32.700C24 32.500 21.700 33.100 19.500 35L11.400 43.800L15.700 49.300L24.500 42C26.500 40 27.800 37 27.700 32.700Z"/><path d="M38.200 32.700C42 32.500 44.300 33.100 46.500 35L55.500 43.800L50.800 49.300L41.500 42C39.500 40 38.100 37 38.200 32.700Z"/></g></svg><div class="t">CPA</div>
<svg class="ch" viewBox="0 0 30 34"><path d="M9.200 6.500L20.800 17L9.200 27.500" class="g"/></svg>
</div>
<div class="mi" style="top:765px"><svg class="ic" viewBox="0 0 64 64"><g class="g"><circle cx="32.300" cy="17.300" r="4"/><path d="M32.300 21.400V22.600Q32.300 25.600 29.300 25.600H16.200Q12 25.600 12 30T16.200 34.300H45.800Q49.900 34.300 49.900 37.900T45.800 41.500H26Q21.900 41.500 21.900 45T26 48.400H32.900"/></g></svg><div class="t">Route</div>
<svg class="ch" viewBox="0 0 30 34"><path d="M9.200 6.500L20.800 17L9.200 27.500" class="g"/></svg>
</div>
<div class="mi" style="top:875px"><svg class="ic" viewBox="0 0 64 64"><g class="g"><circle cx="32" cy="31" r="20.500"/><circle cx="32" cy="31" r="12.400"/></g></svg><div class="t">Recording</div>
<svg class="ch" viewBox="0 0 30 34"><path d="M9.200 6.500L20.800 17L9.200 27.500" class="g"/></svg>
</div>
<div class="mi" style="top:985px"><svg class="ic" viewBox="0 0 64 64"><g class="g"><path d="M11.200 34H39.600"/><circle cx="43.700" cy="34" r="3.800"/><circle cx="31.300" cy="24" r="3.800"/><circle cx="32.900" cy="43.900" r="3.800"/><path d="M27.500 24.600Q21.900 25 21.900 30V38Q21.900 43 29 43.600"/></g></svg><div class="t">Connect</div>
<svg class="ch" viewBox="0 0 30 34"><path d="M9.200 6.500L20.800 17L9.200 27.500" class="g"/></svg>
</div>
<div class="mi" style="top:1095px"><svg class="ic" viewBox="0 0 64 64"><g class="g"><ellipse cx="31.300" cy="16.400" rx="6" ry="8.200"/><ellipse cx="31" cy="41.800" rx="14.500" ry="9"/></g></svg><div class="t">Profiles</div>
<svg class="ch" viewBox="0 0 30 34"><path d="M9.200 6.500L20.800 17L9.200 27.500" class="g"/></svg>
</div>
<div class="mi act" style="top:1205px"><svg class="ic" viewBox="0 0 64 64"><g class="k"><path d="M12.500 19.400H37M46 19.400H52M12.500 29.900H19.300M28.300 29.900H52M12.500 39.800H31M40 39.800H52"/><circle cx="41.500" cy="19.400" r="4.300"/><circle cx="23.800" cy="29.900" r="4.300"/><circle cx="35.500" cy="39.800" r="4.300"/></g></svg><div class="t">Chart Preferences</div>
<div class="abs" style="left:520px;top:33px;width:44px;height:44px;border-radius:50%;background:#0b63f6"></div><svg class="ch" viewBox="0 0 30 34"><path d="M10 7.500L20.500 17L10 26.500" fill="none" stroke="#fff" stroke-width="2.800" stroke-linecap="round" stroke-linejoin="round"/></svg>
</div>
<div class="mi" style="top:1315px"><svg class="ic" viewBox="0 0 64 64"><g class="g"><path d="M38 41.200H17C15.300 41.200 14 40 14 38.200V15.700C14 14 15.300 12.700 17 12.700H50C51.700 12.700 53 14 53 15.700V34"/><path d="M14 21.100H53"/><path d="M39.400 29.200L41.500 50.100L46.500 45.500L51 54.600L55.500 52.400L51 43.500L57.400 42Z" fill="#fff"/></g></svg><div class="t">User Interface</div>
<svg class="ch" viewBox="0 0 30 34"><path d="M9.200 6.500L20.800 17L9.200 27.500" class="g"/></svg>
</div>
<div class="mi" style="top:1425px"><svg class="ic" viewBox="0 0 64 64"><g class="g"><path d="M32 12.500C33 12.500 33.600 13.200 34 14.200L37.900 23.400L47.800 24.300C50 24.500 50.800 26.700 49.200 28.200L41.700 34.800L43.900 44.500C44.400 46.700 42.500 48 40.600 46.900L32 41.800L23.400 46.900C21.500 48 19.600 46.700 20.100 44.500L22.300 34.800L14.800 28.200C13.200 26.700 14 24.500 16.200 24.300L26.100 23.400L30 14.200C30.400 13.200 31 12.500 32 12.500Z"/></g></svg><div class="t">Favorites</div>
<svg class="ch" viewBox="0 0 30 34"><path d="M9.200 6.500L20.800 17L9.200 27.500" class="g"/></svg>
</div>
<div class="mi" style="top:1535px"><svg class="ic" viewBox="0 0 64 64"><g class="g"><circle cx="32" cy="15.200" r="4"/><rect x="27.800" y="23.300" width="8.400" height="24" rx="4.200"/></g></svg><div class="t">About Qastor</div>
<svg class="ch" viewBox="0 0 30 34"><path d="M9.200 6.500L20.800 17L9.200 27.500" class="g"/></svg>
</div>
<div class="circ" style="left:73px;top:117px"></div><svg class="abs" style="left:73px;top:117px" width="60" height="60"><path d="M34.800 20L23 30L34.800 40.200" fill="none" stroke="#0b63f6" stroke-width="3" stroke-linecap="round" stroke-linejoin="round"/></svg>
<div class="abs" style="left:171px;top:127px;font-size:32.500px;line-height:38px;color:#1d1d1f;white-space:nowrap">Main Menu</div>
<div class="abs" style="left:171px;top:170px;font-size:28px;line-height:34px;color:#868686;white-space:nowrap">App &amp; journey settings</div>
<div class="abs" style="left:73px;top:300px;width:512px;height:3px;background:#d9d9d9"></div>
</div>
<div class="circ" style="left:32px;top:151px"></div><svg class="abs" style="left:32px;top:151px" width="60" height="60"><path d="M25.200 20L37 30L25.200 40.200" fill="none" stroke="#0b63f6" stroke-width="3" stroke-linecap="round" stroke-linejoin="round"/></svg>
<div class="abs" style="left:62px;top:294px;width:0;height:0"><div style="position:absolute;left:-60px;top:-16px;width:120px;height:32px;text-align:center;font-size:26px;line-height:32px;color:#8a8a8a;transform:rotate(-90deg) scaleX(0.850);white-space:nowrap">SIDEBAR</div></div>
<svg class="abs" style="left:30px;top:1633px" width="64" height="64" viewBox="0 0 64 64"><g class="g"><path d="M17.500 42.500H46.500C47.500 42.500 48 41.500 47.300 40.700C45 38 43.500 35.500 43.500 30.500V27C43.500 20.500 38.500 15 32 15S20.500 20.500 20.500 27V30.500C20.500 35.500 19 38 16.700 40.700C16 41.500 16.500 42.500 17.500 42.500Z"/><path d="M28 43C28 45.500 29.800 47.300 32 47.300S36 45.500 36 43"/></g></svg>
<div class="abs" style="left:17px;top:1732px;width:88px;height:3px;background:#d9d9d9"></div>
<svg class="abs" style="left:30px;top:1763px" width="64" height="64" viewBox="0 0 64 64"><g class="g" stroke-width="2.500"><path d="M41 7L43.500 12.800L49.800 13.400L45 17.500L46.500 23.700L41 20.400L35.500 23.700L37 17.500L32.200 13.400L38.500 12.800Z"/><path d="M33.500 18.500H28C24.500 18.500 22.500 20.500 22.500 24V33"/><path d="M41.500 25V33"/><path d="M16.500 38.500L32 25.500L47.500 38.500"/><path d="M22.500 33L16.500 38.500C17 46 24 51.500 32 51.500S47 46 47.500 38.500L41.500 33"/></g></svg>
<svg class="abs" style="left:30px;top:1855px" width="64" height="64" viewBox="0 0 64 64"><g class="g"><path d="M32 12.500C33 12.500 33.600 13.200 34 14.200L37.900 23.400L47.800 24.300C50 24.500 50.800 26.700 49.200 28.200L41.700 34.800L43.900 44.500C44.400 46.700 42.500 48 40.600 46.900L32 41.800L23.400 46.900C21.500 48 19.600 46.700 20.100 44.500L22.300 34.800L14.800 28.200C13.200 26.700 14 24.500 16.200 24.300L26.100 23.400L30 14.200C30.400 13.200 31 12.500 32 12.500Z"/></g></svg>
<svg class="abs" style="left:30px;top:1950px" width="64" height="64" viewBox="0 0 64 64"><g class="g" stroke-linejoin="round"><path d="M28.7 18.2L29.5 13.7L34.5 13.7L35.3 18.2L39.4 19.9L43.2 17.3L46.7 20.8L44.1 24.6L45.8 28.7L50.3 29.5L50.3 34.5L45.8 35.3L44.1 39.4L46.7 43.2L43.2 46.7L39.4 44.1L35.3 45.8L34.5 50.3L29.5 50.3L28.7 45.8L24.6 44.1L20.8 46.7L17.3 43.2L19.9 39.4L18.2 35.3L13.7 34.5L13.7 29.5L18.2 28.7L19.9 24.6L17.3 20.8L20.8 17.3L24.6 19.9Z" stroke-width="2.600"/><circle cx="32" cy="32" r="6.500"/></g></svg>
<div id="mid"></div><div id="midside"></div>
<div class="abs" style="left:857px;top:152px;width:170px;height:59px;border:2.700px solid #0b63f6;border-radius:30px"></div>
<svg class="abs" style="left:857px;top:152px" width="170" height="59"><path d="M30.500 20L20 29.500L30.500 39" fill="none" stroke="#0b63f6" stroke-width="2.800" stroke-linecap="round" stroke-linejoin="round"/></svg>
<div class="abs" style="left:920px;top:162px;font-size:29.500px;line-height:36px;color:#0b63f6;white-space:nowrap;transform:scaleX(.95);transform-origin:left">Close</div>
<div class="abs" style="left:1068px;top:155px;font-size:34px;line-height:40px;color:#2a2a2c;white-space:nowrap;transform:scaleX(.970);transform-origin:left">Chart Preferences</div>
<div class="abs" style="left:1078px;top:208px;font-size:28px;line-height:36px;color:#868686;white-space:nowrap">Display settings for the chart</div>
<div class="abs" style="left:845px;top:336px;width:1214px;height:2px;background:#dcdcdc"></div>
<div class="abs" style="left:845px;top:400px;width:1214px;height:1538px;overflow:hidden">
<div class="abs" style="left:0;top:-154px;width:1214px;height:220px;background:#fff;border-radius:28px">
<div class="row" style="top:110px"><svg class="st" viewBox="0 0 40 40" style="left:28px;top:35px;width:37.500px;height:37.500px"><path d="M20 2.500C21 2.500 21.700 3.200 22.100 4.200L26.100 13.800L36.500 14.700C38.700 14.900 39.500 17.200 37.900 18.700L30 25.600L32.400 35.800C32.900 38 31 39.300 29.100 38.200L20 32.800L10.900 38.200C9 39.300 7.100 38 7.600 35.800L10 25.600L2.100 18.700C0.500 17.200 1.300 14.900 3.500 14.700L13.900 13.800L17.900 4.200C18.300 3.200 19 2.500 20 2.500Z" fill="none" stroke="#8c8c8c" stroke-width="2.600" stroke-linejoin="round"/></svg><div class="t" style="color:#8c8c8c">Bathymetric Source</div><div class="t" style="left:auto;right:38px;color:#9a9a9a">Bathymetric cells</div></div>
</div>
<div class="abs" style="left:0;top:107px;font-size:27.500px;line-height:34px;color:#7e7e7e;white-space:nowrap">INFORMATION</div>
<div class="abs" style="left:0;top:155px;width:1214px;height:1600px;background:#fff;border-radius:28px">
<div class="row" style="top:0px"><svg class="st" viewBox="0 0 40 40" style="left:28px;top:35px;width:37.500px;height:37.500px"><path d="M20 2.500C21 2.500 21.700 3.200 22.100 4.200L26.100 13.800L36.500 14.700C38.700 14.900 39.500 17.200 37.900 18.700L30 25.600L32.400 35.800C32.900 38 31 39.300 29.100 38.200L20 32.800L10.900 38.200C9 39.300 7.100 38 7.600 35.800L10 25.600L2.100 18.700C0.500 17.200 1.300 14.900 3.500 14.700L13.900 13.800L17.900 4.200C18.300 3.200 19 2.500 20 2.500Z" fill="none" stroke="#2a2a2c" stroke-width="2.600" stroke-linejoin="round"/></svg><div class="t">Place Names And Labels</div><div class="tg on"><i></i></div><div class="sep"></div></div>
<div class="row" style="top:110px"><svg class="st" viewBox="0 0 40 40" style="left:28px;top:35px;width:37.500px;height:37.500px"><path d="M20 2.500C21 2.500 21.700 3.200 22.100 4.200L26.100 13.800L36.500 14.700C38.700 14.900 39.500 17.200 37.900 18.700L30 25.600L32.400 35.800C32.900 38 31 39.300 29.100 38.200L20 32.800L10.900 38.200C9 39.300 7.100 38 7.600 35.800L10 25.600L2.100 18.700C0.500 17.200 1.300 14.900 3.500 14.700L13.900 13.800L17.900 4.200C18.300 3.200 19 2.500 20 2.500Z" fill="none" stroke="#2a2a2c" stroke-width="2.600" stroke-linejoin="round"/></svg><div class="t">Quality Information</div><div class="tg off"><i></i></div><div class="sep"></div></div>
<div class="row" style="top:220px"><svg class="st" viewBox="0 0 40 40" style="left:28px;top:35px;width:37.500px;height:37.500px"><path d="M20 2.500C21 2.500 21.700 3.200 22.100 4.200L26.100 13.800L36.500 14.700C38.700 14.900 39.500 17.200 37.900 18.700L30 25.600L32.400 35.800C32.900 38 31 39.300 29.100 38.200L20 32.800L10.900 38.200C9 39.300 7.100 38 7.600 35.800L10 25.600L2.100 18.700C0.500 17.200 1.300 14.900 3.500 14.700L13.900 13.800L17.900 4.200C18.300 3.200 19 2.500 20 2.500Z" fill="none" stroke="#2a2a2c" stroke-width="2.600" stroke-linejoin="round"/></svg><div class="t">Information Points</div><div class="tg off"><i></i></div><div class="sep"></div></div>
<div class="row" style="top:330px"><svg class="st" viewBox="0 0 40 40" style="left:28px;top:35px;width:37.500px;height:37.500px"><path d="M20 2.500C21 2.500 21.700 3.200 22.100 4.200L26.100 13.800L36.500 14.700C38.700 14.900 39.500 17.200 37.900 18.700L30 25.600L32.400 35.800C32.900 38 31 39.300 29.100 38.200L20 32.800L10.900 38.200C9 39.300 7.100 38 7.600 35.800L10 25.600L2.100 18.700C0.500 17.200 1.300 14.900 3.500 14.700L13.900 13.800L17.900 4.200C18.300 3.200 19 2.500 20 2.500Z" fill="none" stroke="#2a2a2c" stroke-width="2.600" stroke-linejoin="round"/></svg><div class="t">Lights</div><div class="tg on"><i></i></div><div class="sep"></div></div>
<div class="row" style="top:440px"><svg class="st" viewBox="0 0 40 40" style="left:28px;top:35px;width:37.500px;height:37.500px"><path d="M20 2.500C21 2.500 21.700 3.200 22.100 4.200L26.100 13.800L36.500 14.700C38.700 14.900 39.500 17.200 37.900 18.700L30 25.600L32.400 35.800C32.900 38 31 39.300 29.100 38.200L20 32.800L10.900 38.200C9 39.300 7.100 38 7.600 35.800L10 25.600L2.100 18.700C0.500 17.200 1.300 14.900 3.500 14.700L13.900 13.800L17.900 4.200C18.300 3.200 19 2.500 20 2.500Z" fill="none" stroke="#2a2a2c" stroke-width="2.600" stroke-linejoin="round"/></svg><div class="t">Light Sectors</div><div class="tg on"><i></i></div><div class="sep"></div></div>
<div class="row" style="top:550px"><svg class="st" viewBox="0 0 40 40" style="left:28px;top:35px;width:37.500px;height:37.500px"><path d="M20 2.500C21 2.500 21.700 3.200 22.100 4.200L26.100 13.800L36.500 14.700C38.700 14.900 39.500 17.200 37.900 18.700L30 25.600L32.400 35.800C32.900 38 31 39.300 29.100 38.200L20 32.800L10.900 38.200C9 39.300 7.100 38 7.600 35.800L10 25.600L2.100 18.700C0.500 17.200 1.300 14.900 3.500 14.700L13.900 13.800L17.900 4.200C18.300 3.200 19 2.500 20 2.500Z" fill="none" stroke="#2a2a2c" stroke-width="2.600" stroke-linejoin="round"/></svg><div class="t">Light Descriptions</div><div class="tg off"><i></i></div><div class="sep"></div></div>
<div class="row" style="top:660px"><svg class="st" viewBox="0 0 40 40" style="left:28px;top:35px;width:37.500px;height:37.500px"><path d="M20 2.500C21 2.500 21.700 3.200 22.100 4.200L26.100 13.800L36.500 14.700C38.700 14.900 39.500 17.200 37.900 18.700L30 25.600L32.400 35.800C32.900 38 31 39.300 29.100 38.200L20 32.800L10.900 38.200C9 39.300 7.100 38 7.600 35.800L10 25.600L2.100 18.700C0.500 17.200 1.300 14.900 3.500 14.700L13.900 13.800L17.900 4.200C18.300 3.200 19 2.500 20 2.500Z" fill="none" stroke="#2a2a2c" stroke-width="2.600" stroke-linejoin="round"/></svg><div class="t">Position Names</div><div class="tg on"><i></i></div><div class="sep"></div></div>
<div class="row" style="top:770px"><svg class="st" viewBox="0 0 40 40" style="left:28px;top:35px;width:37.500px;height:37.500px"><path d="M20 2.500C21 2.500 21.700 3.200 22.100 4.200L26.100 13.800L36.500 14.700C38.700 14.900 39.500 17.200 37.900 18.700L30 25.600L32.400 35.800C32.900 38 31 39.300 29.100 38.200L20 32.800L10.900 38.200C9 39.300 7.100 38 7.600 35.800L10 25.600L2.100 18.700C0.500 17.200 1.300 14.900 3.500 14.700L13.900 13.800L17.900 4.200C18.300 3.200 19 2.500 20 2.500Z" fill="none" stroke="#2a2a2c" stroke-width="2.600" stroke-linejoin="round"/></svg><div class="t">Precautionary Areas/Dredge Areas</div><div class="tg on"><i></i></div><div class="sep"></div></div>
<div class="row" style="top:880px"><svg class="st" viewBox="0 0 40 40" style="left:28px;top:35px;width:37.500px;height:37.500px"><path d="M20 2.500C21 2.500 21.700 3.200 22.100 4.200L26.100 13.800L36.500 14.700C38.700 14.900 39.500 17.200 37.900 18.700L30 25.600L32.400 35.800C32.900 38 31 39.300 29.100 38.200L20 32.800L10.900 38.200C9 39.300 7.100 38 7.600 35.800L10 25.600L2.100 18.700C0.500 17.200 1.300 14.900 3.500 14.700L13.900 13.800L17.900 4.200C18.300 3.200 19 2.500 20 2.500Z" fill="none" stroke="#2a2a2c" stroke-width="2.600" stroke-linejoin="round"/></svg><div class="t">Restricted Areas</div><div class="tg on"><i></i></div><div class="sep"></div></div>
<div class="row" style="top:990px"><svg class="st" viewBox="0 0 40 40" style="left:28px;top:35px;width:37.500px;height:37.500px"><path d="M20 2.500C21 2.500 21.700 3.200 22.100 4.200L26.100 13.800L36.500 14.700C38.700 14.900 39.500 17.200 37.900 18.700L30 25.600L32.400 35.800C32.900 38 31 39.300 29.100 38.200L20 32.800L10.900 38.200C9 39.300 7.100 38 7.600 35.800L10 25.600L2.100 18.700C0.500 17.200 1.300 14.900 3.500 14.700L13.900 13.800L17.900 4.200C18.300 3.200 19 2.500 20 2.500Z" fill="none" stroke="#2a2a2c" stroke-width="2.600" stroke-linejoin="round"/></svg><div class="t">Anchorage Area Information</div><div class="tg on"><i></i></div><div class="sep"></div></div>
<div class="row" style="top:1100px"><svg class="st" viewBox="0 0 40 40" style="left:28px;top:35px;width:37.500px;height:37.500px"><path d="M20 2.500C21 2.500 21.700 3.200 22.100 4.200L26.100 13.800L36.500 14.700C38.700 14.900 39.500 17.200 37.900 18.700L30 25.600L32.400 35.800C32.900 38 31 39.300 29.100 38.200L20 32.800L10.900 38.200C9 39.300 7.100 38 7.600 35.800L10 25.600L2.100 18.700C0.500 17.200 1.300 14.900 3.500 14.700L13.900 13.800L17.900 4.200C18.300 3.200 19 2.500 20 2.500Z" fill="none" stroke="#2a2a2c" stroke-width="2.600" stroke-linejoin="round"/></svg><div class="t">Pipeline Submarine/On Land</div><div class="tg on"><i></i></div><div class="sep"></div></div>
<div class="row" style="top:1210px"><svg class="st" viewBox="0 0 40 40" style="left:28px;top:35px;width:37.500px;height:37.500px"><path d="M20 2.500C21 2.500 21.700 3.200 22.100 4.200L26.100 13.800L36.500 14.700C38.700 14.900 39.500 17.200 37.900 18.700L30 25.600L32.400 35.800C32.900 38 31 39.300 29.100 38.200L20 32.800L10.900 38.200C9 39.300 7.100 38 7.600 35.800L10 25.600L2.100 18.700C0.500 17.200 1.300 14.900 3.500 14.700L13.900 13.800L17.900 4.200C18.300 3.200 19 2.500 20 2.500Z" fill="none" stroke="#2a2a2c" stroke-width="2.600" stroke-linejoin="round"/></svg><div class="t">Railway</div><div class="tg on"><i></i></div><div class="sep"></div></div>
<div class="row" style="top:1320px"><svg class="st" viewBox="0 0 40 40" style="left:28px;top:35px;width:37.500px;height:37.500px"><path d="M20 2.500C21 2.500 21.700 3.200 22.100 4.200L26.100 13.800L36.500 14.700C38.700 14.900 39.500 17.200 37.900 18.700L30 25.600L32.400 35.800C32.900 38 31 39.300 29.100 38.200L20 32.800L10.900 38.200C9 39.300 7.100 38 7.600 35.800L10 25.600L2.100 18.700C0.500 17.200 1.300 14.900 3.500 14.700L13.900 13.800L17.900 4.200C18.300 3.200 19 2.500 20 2.500Z" fill="none" stroke="#2a2a2c" stroke-width="2.600" stroke-linejoin="round"/></svg><div class="t">Nautical Publication Information</div><div class="tg on"><i></i></div><div class="sep"></div></div>
</div>
<div class="abs" style="left:0;top:0;width:1214px;height:46px;background:linear-gradient(180deg,#e7e7e7 0,#e7e7e7 12%,rgba(231,231,231,0) 100%)"></div>
<div class="abs" style="left:0;top:1470px;width:1214px;height:68px;background:linear-gradient(180deg,rgba(231,231,231,0) 0,rgba(231,231,231,.75) 100%)"></div>
</div>
<div class="abs" style="left:2143px;top:1023px;width:5px;height:74px;border-radius:3px;background:#6f6f6f"></div>
<div id="lborder"></div><div id="bborder"></div>
<div class="abs" style="left:3704px;top:58px;width:88px;height:88px;border-radius:50%;background:#fff;box-shadow:0 6px 10px rgba(0,0,0,.18)"></div>
<svg class="abs" style="left:3704px;top:58px" width="88" height="88"><path d="M44 15.500Q45 15.500 45.500 17L53.500 39.500Q54 42 52 42H36Q34 42 34.500 39.500L42.500 17Q43 15.500 44 15.500Z" fill="#e60012"/><path d="M44 15.500Q45 15.500 45.500 17L53.500 39.500Q54 42 52 42H44Z" fill="#b8000e"/></svg>
<div class="abs" style="left:3704px;top:100px;width:88px;text-align:center;font-size:29px;line-height:34px;color:#777">N</div>
<div class="abs" style="left:3536.500px;top:253px;width:80px;height:80px;border-radius:50%;background:linear-gradient(180deg,#fff 0,#fff 75%,#e4e4e4 100%);box-shadow:0 0 0 1px #c6c6c6,0 2px 0 1.500px #8e918a"></div>
<div class="abs" style="left:3421px;top:260px;width:312px;height:63px;border-radius:32px;background:#fff;box-shadow:0 3px 6px rgba(0,0,0,.16)"></div>
<svg class="abs" style="left:3436px;top:270px" width="50" height="44" viewBox="0 0 50 44"><g fill="none" stroke="#2c2c2e" stroke-width="2.400" stroke-linecap="round"><path d="M5 7H11.500V36.500H5M5 14.500H11.500M5 21.800H11.500M5 29.200H11.500" stroke-linecap="butt"/><path d="M16 22.500C17 19.500 20 18.500 22 20.500S25.500 24.500 28.500 23S31.500 18.500 34.500 19S38 23.500 41 23.500S44.500 21.500 44.500 20"/><path d="M16 33C17 30 20 29 22 31S25.500 35 28.500 33.500S31.500 29 34.500 29.500S38 34 41 34S44.500 32 44.500 30.500"/></g></svg>
<div class="abs" style="left:3499px;top:277px;width:2px;height:29px;background:#d4d4d4"></div>
<div class="abs" style="left:3518px;top:271px;font-size:37px;line-height:44px;color:#2c2c2e;white-space:nowrap">+0.94</div>
<div class="abs" style="left:3617px;top:277px;font-size:27.500px;line-height:36px;color:#8a8a8e;white-space:nowrap">m ALAT</div>
<div class="abs" style="left:3690px;top:737px;width:104px;height:36px;border-radius:9px;background:#fff;font-size:15.1px;line-height:36px;padding-left:12px;color:#444;white-space:nowrap;overflow:hidden">BARNES++</div>
<div class="abs" style="left:3679px;top:1063px;width:170px;height:36px;border-radius:9px;background:#fff;font-size:15.1px;line-height:36px;padding-left:12px;color:#444;white-space:nowrap;overflow:hidden">CRANE BARGE 4++</div>
<div class="abs" style="left:2910px;top:2004px;width:111px;height:35px;border-radius:9px;background:#fff;font-size:15.1px;line-height:35px;padding-left:12px;color:#444;white-space:nowrap;overflow:hidden">ALBATROS+</div>
<div class="abs" style="left:3692px;top:1864px;width:100px;height:174px;border-radius:32px;background:linear-gradient(90deg,#fff 0,#fbfbfb 50%,#efefef 100%)"></div>
<div class="abs" style="left:3717px;top:1914px;width:6px;height:74px;border-radius:3px;background:#8a8a8a"></div>
<div class="abs" style="left:3756px;top:1832px;width:62px;height:62px;border-radius:50%;background:#0a68f0;box-shadow:0 5px 8px rgba(0,0,0,.2)"></div>
<svg class="abs" style="left:3756px;top:1832px" width="62" height="62" viewBox="0 0 62 62"><g fill="none" stroke="#fff" stroke-width="2.200" stroke-linejoin="round"><path d="M19.500 43.500L22 36L40.500 18.500Q43 17 45 19T45.500 23.500L27 41.500Z"/><path d="M22 36L27 41.500"/><path d="M37.500 21.500L42.500 26.500"/></g><path d="M19.500 43.500L21 39L24 42Z" fill="#fff"/></svg>
</body></html>
